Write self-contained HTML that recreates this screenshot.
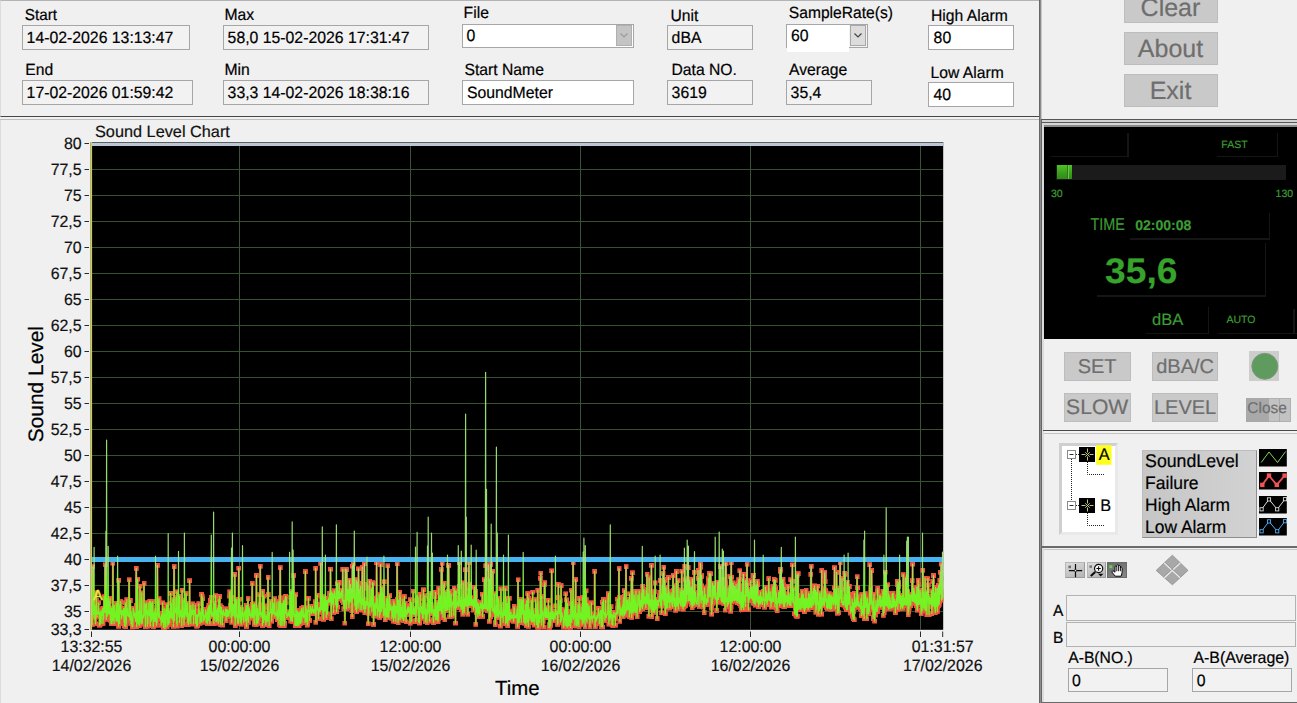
<!DOCTYPE html>
<html><head><meta charset="utf-8"><title>Sound Level Meter</title>
<style>
html,body{margin:0;padding:0;}
body{text-rendering:geometricPrecision;width:1297px;height:703px;overflow:hidden;background:#f0f0f0;position:relative;font-family:"Liberation Sans", Arial, sans-serif;}
.t{position:absolute;white-space:nowrap;}
.b{position:absolute;box-sizing:border-box;}
svg{position:absolute;overflow:visible;}
svg text{font-family:"Liberation Sans", Arial, sans-serif;}
</style></head><body>
<div class="b" style="left:0;top:119px;width:1040px;height:584px;border-left:1px solid #dcdcdc;"></div>
<svg width="1297" height="703" style="left:0;top:0">
<defs><marker id="sq" markerWidth="5" markerHeight="5" refX="2.5" refY="2.5" markerUnits="userSpaceOnUse"><rect width="5" height="5" fill="#f2563e"/></marker><linearGradient id="gg" gradientUnits="userSpaceOnUse" x1="0" y1="142" x2="0" y2="630"><stop offset="0" stop-color="#a2ea74"/><stop offset="0.86" stop-color="#a2ea74"/><stop offset="0.93" stop-color="#6cff22"/><stop offset="1" stop-color="#68ff1c"/></linearGradient><clipPath id="cp"><rect x="91" y="141.5" width="852.2" height="488.3"/></clipPath></defs>
<rect x="90.5" y="142" width="852.7" height="487.8" fill="#000"/>
<path d="M239.5 142 V629.8 M410.5 142 V629.8 M580.5 142 V629.8 M750.5 142 V629.8 M920.5 142 V629.8" stroke="#3d523a" stroke-width="1" fill="none"/>
<path d="M91 169.5 H943 M91 195.5 H943 M91 221.5 H943 M91 247.5 H943 M91 273.5 H943 M91 299.5 H943 M91 325.5 H943 M91 351.5 H943 M91 377.5 H943 M91 403.5 H943 M91 429.5 H943 M91 455.5 H943 M91 481.5 H943 M91 507.5 H943 M91 533.5 H943 M91 559.5 H943 M91 585.5 H943 M91 611.5 H943" stroke="#34522b" stroke-width="1" fill="none"/>
<g clip-path="url(#cp)">
<rect x="91" y="142" width="852.6" height="1" fill="#5a625e"/><rect x="91" y="143" width="852.2" height="3" fill="#bcc6d8"/>
<path d="M91.5 616.8 L91.7 615.0 L92.0 614.6 L92.2 624.4 L92.4 599.6 L92.7 614.6 L92.9 566.7 L93.1 606.0 L93.4 613.3 L93.6 609.5 L93.9 614.4 M94.3 619.1 L94.6 605.3 L94.8 618.5 L95.0 614.0 L95.3 617.2 L95.5 623.8 L95.7 606.6 L96.0 614.2 L96.2 592.8 L96.4 600.4 L96.7 607.9 L96.9 615.3 L97.1 612.6 L97.4 612.6 L97.6 613.9 L97.9 611.6 L98.1 613.5 L98.3 611.5 L98.6 602.8 L98.8 614.6 L99.0 614.1 L99.3 614.3 L99.5 625.2 L99.7 612.3 L100.0 624.9 L100.2 616.4 L100.4 615.6 L100.7 614.1 L100.9 610.7 L101.1 623.5 L101.4 614.5 L101.6 615.4 L101.9 614.9 L102.1 615.3 L102.3 609.8 L102.6 614.0 L102.8 608.1 L103.0 623.4 L103.3 609.4 L103.5 616.0 L103.7 619.1 L104.0 596.7 L104.2 611.7 L104.4 612.4 L104.7 612.1 L104.9 610.2 L105.1 564.8 L105.4 612.3 L105.6 612.6 M106.1 611.1 L106.3 619.3 M106.8 600.8 L107.0 616.5 L107.3 601.8 L107.5 614.8 L107.7 615.1 L108.0 610.0 M108.4 610.8 L108.7 612.3 L108.9 613.4 L109.1 612.2 L109.4 601.4 L109.6 612.5 L109.9 614.9 L110.1 598.1 L110.3 620.2 L110.6 614.5 L110.8 615.5 L111.0 623.7 L111.3 616.2 L111.5 607.8 L111.7 618.0 L112.0 623.8 L112.2 616.7 L112.4 615.7 L112.7 616.5 L112.9 563.1 L113.1 620.3 L113.4 616.1 L113.6 613.7 L113.9 610.3 L114.1 623.7 L114.3 605.3 L114.6 610.6 L114.8 614.0 L115.0 613.5 L115.3 617.5 L115.5 612.5 L115.7 614.6 L116.0 621.1 L116.2 603.3 L116.4 611.6 L116.7 611.1 L116.9 611.3 L117.1 621.2 L117.4 606.5 M117.9 614.5 L118.1 614.8 L118.3 619.8 L118.6 626.3 L118.8 580.4 L119.0 616.2 L119.3 614.3 L119.5 616.3 L119.7 623.6 L120.0 608.6 L120.2 604.9 L120.4 611.9 L120.7 601.6 L120.9 613.8 L121.1 612.4 L121.4 611.1 L121.6 618.6 L121.8 614.8 L122.1 610.4 L122.3 610.5 L122.6 613.3 L122.8 614.7 L123.0 612.5 L123.3 615.8 L123.5 608.6 L123.7 612.6 L124.0 621.4 L124.2 611.2 L124.4 626.0 L124.7 608.1 L124.9 613.4 L125.1 610.8 L125.4 602.8 L125.6 611.0 L125.8 626.8 L126.1 621.4 L126.3 623.4 L126.6 612.3 L126.8 599.7 L127.0 607.7 L127.3 608.4 L127.5 609.9 L127.7 615.8 L128.0 614.1 L128.2 615.4 L128.4 614.2 L128.7 616.7 L128.9 614.1 L129.1 579.8 L129.4 609.8 L129.6 615.1 L129.8 618.0 L130.1 620.1 L130.3 600.5 L130.6 618.1 L130.8 612.3 L131.0 623.9 L131.3 611.9 L131.5 623.3 L131.7 616.1 L132.0 627.0 L132.2 617.3 L132.4 618.3 L132.7 626.3 L132.9 623.1 L133.1 608.2 L133.4 609.0 L133.6 610.8 L133.8 610.0 L134.1 615.4 L134.3 614.4 L134.6 617.4 L134.8 613.1 L135.0 617.2 L135.3 615.6 L135.5 621.2 L135.7 616.4 L136.0 613.8 L136.2 568.4 L136.4 605.1 L136.7 626.7 L136.9 609.2 L137.1 616.5 L137.4 611.1 L137.6 579.1 L137.8 612.7 L138.1 624.0 L138.3 617.4 L138.6 615.7 L138.8 611.2 L139.0 611.2 L139.3 625.6 L139.5 614.7 L139.7 611.9 L140.0 586.1 L140.2 614.4 L140.4 610.8 L140.7 621.8 L140.9 615.1 L141.1 624.0 L141.4 614.2 L141.6 604.6 L141.8 592.9 L142.1 620.5 L142.3 623.3 L142.6 617.8 L142.8 615.5 L143.0 618.1 L143.3 616.7 L143.5 617.5 L143.7 617.7 L144.0 583.4 L144.2 615.5 L144.4 614.3 L144.7 614.6 L144.9 613.6 L145.1 604.1 L145.4 626.7 L145.6 614.4 L145.8 608.2 L146.1 612.9 L146.3 602.8 L146.6 612.3 L146.8 614.4 L147.0 611.9 L147.3 626.3 L147.5 611.6 L147.7 610.3 L148.0 623.6 L148.2 602.8 L148.4 612.1 L148.7 613.6 L148.9 612.7 L149.1 612.6 L149.4 615.7 L149.6 614.4 L149.8 601.0 L150.1 614.6 L150.3 625.9 L150.6 601.5 L150.8 619.7 L151.0 604.9 L151.3 621.2 L151.5 603.1 L151.7 612.7 L152.0 618.7 L152.2 607.2 L152.4 615.3 L152.7 601.6 L152.9 614.0 L153.1 626.0 L153.4 626.5 L153.6 619.1 L153.8 612.5 L154.1 615.7 L154.3 614.8 L154.6 621.2 L154.8 610.7 L155.0 616.7 L155.3 621.1 M155.7 617.5 L156.0 614.1 L156.2 616.4 L156.4 625.3 L156.7 614.4 L156.9 613.1 L157.1 622.7 L157.4 565.3 L157.6 615.1 L157.8 611.3 L158.1 614.7 L158.3 601.5 L158.6 617.7 L158.8 614.9 L159.0 598.7 L159.3 615.3 L159.5 613.1 L159.7 617.0 L160.0 616.7 L160.2 619.5 L160.4 617.4 L160.7 619.8 L160.9 617.9 L161.1 625.2 L161.4 619.9 L161.6 614.7 L161.8 614.6 L162.1 622.3 L162.3 617.1 L162.6 602.9 L162.8 614.2 L163.0 616.2 L163.3 617.4 L163.5 627.4 L163.7 613.8 L164.0 619.6 L164.2 608.4 L164.4 617.5 L164.7 614.7 L164.9 628.4 L165.1 619.8 L165.4 626.7 L165.6 617.8 L165.8 609.9 L166.1 608.8 L166.3 619.0 L166.6 618.9 L166.8 604.8 L167.0 626.6 L167.3 616.0 L167.5 614.6 L167.7 613.9 L168.0 618.2 M168.4 624.4 L168.7 622.0 L168.9 619.1 L169.1 611.5 L169.4 615.2 L169.6 622.8 L169.8 610.6 L170.1 618.3 L170.3 615.8 L170.6 593.4 L170.8 617.3 L171.0 615.5 L171.3 603.0 L171.5 616.3 L171.7 615.2 L172.0 618.9 L172.2 614.2 L172.4 612.8 L172.7 615.7 L172.9 599.3 L173.1 612.8 L173.4 626.3 L173.6 607.5 L173.8 605.6 L174.1 566.6 L174.3 601.8 L174.5 620.6 L174.8 608.3 L175.0 611.8 L175.3 612.7 L175.5 611.9 L175.7 610.7 L176.0 597.5 L176.2 607.5 L176.4 608.4 L176.7 623.5 L176.9 591.9 L177.1 626.1 L177.4 607.2 L177.6 611.3 L177.8 610.5 L178.1 613.7 L178.3 612.9 M178.8 616.4 L179.0 601.3 L179.3 613.3 L179.5 622.3 L179.7 596.2 L180.0 615.3 L180.2 616.6 L180.4 613.4 L180.7 615.4 L180.9 615.3 L181.1 610.5 L181.4 613.8 L181.6 622.6 L181.8 625.9 L182.1 590.2 L182.3 616.8 L182.5 617.4 L182.8 600.3 L183.0 614.7 L183.3 615.0 L183.5 614.1 L183.7 615.2 L184.0 624.8 L184.2 616.1 M184.7 617.9 L184.9 614.8 L185.1 616.4 L185.4 613.3 L185.6 610.4 L185.8 611.9 L186.1 593.6 L186.3 613.4 L186.5 613.1 L186.8 616.6 L187.0 614.6 L187.3 615.5 L187.5 603.0 L187.7 622.7 L188.0 616.2 L188.2 613.7 L188.4 624.7 L188.7 615.2 L188.9 623.2 L189.1 613.3 L189.4 613.2 L189.6 580.7 L189.8 617.6 L190.1 616.9 L190.3 620.6 L190.5 616.2 L190.8 623.7 L191.0 605.3 L191.3 616.3 L191.5 613.8 L191.7 610.6 L192.0 613.5 L192.2 613.7 L192.4 614.5 L192.7 614.2 L192.9 603.9 L193.1 612.0 L193.4 612.1 L193.6 624.0 L193.8 612.8 L194.1 615.2 L194.3 610.2 L194.5 610.9 L194.8 610.8 L195.0 613.1 L195.3 605.3 L195.5 616.5 L195.7 623.4 L196.0 614.8 L196.2 616.4 L196.4 617.9 L196.7 626.2 L196.9 614.5 L197.1 625.7 L197.4 615.2 L197.6 625.3 L197.8 614.8 L198.1 616.8 L198.3 616.8 L198.5 614.6 L198.8 603.7 L199.0 614.6 L199.3 612.2 L199.5 610.7 L199.7 613.8 L200.0 623.3 L200.2 618.1 L200.4 614.7 L200.7 612.2 L200.9 615.5 L201.1 618.0 L201.4 622.0 L201.6 594.3 L201.8 611.5 L202.1 596.4 L202.3 615.7 L202.5 613.8 L202.8 598.7 L203.0 622.1 L203.3 609.3 L203.5 619.4 L203.7 616.5 L204.0 614.8 L204.2 620.1 L204.4 617.8 L204.7 617.7 L204.9 616.4 L205.1 616.8 L205.4 615.1 L205.6 609.9 L205.8 613.8 L206.1 622.2 L206.3 614.7 L206.5 614.7 L206.8 614.6 L207.0 612.1 L207.3 623.8 L207.5 611.7 L207.7 609.9 L208.0 607.9 L208.2 608.8 L208.4 620.6 L208.7 608.9 L208.9 605.5 L209.1 605.4 L209.4 606.6 L209.6 610.8 L209.8 623.9 L210.1 609.2 L210.3 604.0 L210.5 600.3 L210.8 613.3 L211.0 597.2 M211.5 614.1 L211.7 616.3 L212.0 611.5 L212.2 614.1 L212.4 614.3 L212.7 615.1 L212.9 614.8 L213.1 616.3 L213.4 615.5 M213.8 623.8 L214.1 610.5 L214.3 619.7 L214.5 619.7 L214.8 608.1 L215.0 603.4 L215.3 608.4 L215.5 595.7 L215.7 607.3 L216.0 621.7 L216.2 612.0 L216.4 621.8 L216.7 610.7 L216.9 613.5 L217.1 619.8 L217.4 608.0 L217.6 611.4 L217.8 609.3 L218.1 621.1 L218.3 623.3 L218.5 611.0 L218.8 599.5 L219.0 611.0 L219.3 609.1 L219.5 611.4 L219.7 596.5 L220.0 621.6 L220.2 605.8 L220.4 607.3 L220.7 624.6 L220.9 610.5 L221.1 609.7 L221.4 607.3 L221.6 610.7 L221.8 614.0 L222.1 610.9 L222.3 613.9 L222.5 625.0 L222.8 614.3 L223.0 615.1 L223.3 613.6 L223.5 609.9 L223.7 614.2 L224.0 615.0 L224.2 613.4 L224.4 615.4 L224.7 615.7 L224.9 615.1 L225.1 612.4 L225.4 614.4 L225.6 608.8 L225.8 611.8 L226.1 620.6 L226.3 611.0 L226.5 610.1 L226.8 609.6 L227.0 611.4 L227.2 616.5 L227.5 616.6 L227.7 610.2 L228.0 612.8 L228.2 616.2 L228.4 611.0 L228.7 611.3 L228.9 616.2 L229.1 611.9 L229.4 613.7 L229.6 596.0 L229.8 591.9 L230.1 605.4 L230.3 609.4 L230.5 610.8 L230.8 605.3 L231.0 617.2 L231.2 610.1 M231.7 622.2 L232.0 597.6 L232.2 597.9 M232.7 616.0 L232.9 615.1 L233.1 615.0 L233.4 614.7 L233.6 605.2 L233.8 613.8 L234.1 614.4 L234.3 611.5 L234.5 616.6 L234.8 574.4 L235.0 613.8 L235.2 625.5 L235.5 599.1 L235.7 617.8 L236.0 615.9 L236.2 615.4 L236.4 614.5 L236.7 602.3 L236.9 599.4 L237.1 615.2 L237.4 618.6 L237.6 623.1 L237.8 614.5 L238.1 621.8 L238.3 620.4 L238.5 623.8 L238.8 568.0 L239.0 615.4 L239.2 614.4 L239.5 599.0 L239.7 617.8 L240.0 616.7 L240.2 622.0 L240.4 617.2 L240.7 607.4 L240.9 616.6 L241.1 624.2 L241.4 621.0 L241.6 615.4 L241.8 614.6 L242.1 611.0 L242.3 614.9 M242.8 616.5 L243.0 615.3 L243.2 620.0 L243.5 613.1 L243.7 622.6 L244.0 613.5 L244.2 613.0 L244.4 613.2 L244.7 611.8 L244.9 614.1 L245.1 610.2 L245.4 621.0 L245.6 609.5 L245.8 611.3 L246.1 605.3 L246.3 612.2 L246.5 626.4 L246.8 620.1 L247.0 610.1 L247.2 606.0 L247.5 619.4 L247.7 609.7 L248.0 598.6 L248.2 610.9 L248.4 622.3 L248.7 613.6 L248.9 614.3 L249.1 608.0 L249.4 615.7 L249.6 609.3 L249.8 611.0 L250.1 615.3 L250.3 614.6 L250.5 615.6 L250.8 618.3 L251.0 614.2 L251.2 616.0 L251.5 611.4 L251.7 615.1 L252.0 604.5 L252.2 583.6 L252.4 617.7 L252.7 609.0 L252.9 605.7 L253.1 615.1 L253.4 614.8 L253.6 616.9 L253.8 604.4 L254.1 622.5 L254.3 624.3 L254.5 604.0 L254.8 603.9 L255.0 614.9 L255.2 611.5 L255.5 611.6 L255.7 610.4 L256.0 611.1 L256.2 624.9 L256.4 575.4 L256.7 614.7 L256.9 622.4 L257.1 611.5 L257.4 613.6 L257.6 608.7 L257.8 623.4 L258.1 621.8 L258.3 617.5 L258.5 612.4 L258.8 619.4 L259.0 613.3 L259.2 607.0 L259.5 594.7 L259.7 614.7 L260.0 613.7 L260.2 566.2 L260.4 604.9 L260.7 613.2 L260.9 616.9 L261.1 613.7 L261.4 615.3 L261.6 613.8 L261.8 615.2 L262.1 612.0 L262.3 615.0 L262.5 625.4 L262.8 591.4 L263.0 610.1 L263.2 608.3 L263.5 614.2 L263.7 622.6 L264.0 596.0 L264.2 613.4 L264.4 619.7 L264.7 605.9 L264.9 615.8 L265.1 614.1 L265.4 616.9 L265.6 616.1 L265.8 624.9 L266.1 620.6 L266.3 617.1 L266.5 621.1 L266.8 615.4 L267.0 614.6 L267.2 621.7 L267.5 607.5 L267.7 620.8 L268.0 577.3 L268.2 594.6 L268.4 617.1 L268.7 615.8 L268.9 615.6 L269.1 625.7 L269.4 613.0 L269.6 612.4 L269.8 612.7 L270.1 611.9 L270.3 601.2 L270.5 612.0 L270.8 613.1 L271.0 609.1 L271.2 611.3 L271.5 609.8 L271.7 621.2 L272.0 613.9 M272.4 613.7 L272.7 611.6 L272.9 606.1 L273.1 614.2 L273.4 603.3 L273.6 612.6 L273.8 612.5 L274.1 607.4 L274.3 611.9 L274.5 613.9 L274.8 598.7 L275.0 616.6 L275.2 613.6 L275.5 614.1 L275.7 612.9 L276.0 613.8 L276.2 614.5 L276.4 615.3 L276.7 615.8 L276.9 602.5 L277.1 619.9 L277.4 618.8 L277.6 610.9 L277.8 613.2 L278.1 616.1 L278.3 615.8 L278.5 617.6 L278.8 601.6 L279.0 624.4 L279.2 616.5 L279.5 610.1 L279.7 614.6 L279.9 615.0 L280.2 567.6 L280.4 597.8 L280.7 625.8 L280.9 611.4 L281.1 609.4 L281.4 610.2 L281.6 619.8 L281.8 603.5 L282.1 625.5 L282.3 614.6 L282.5 613.2 L282.8 610.7 L283.0 603.0 L283.2 607.9 L283.5 620.4 L283.7 600.5 L283.9 622.2 L284.2 625.7 L284.4 605.9 L284.7 623.0 L284.9 607.7 L285.1 598.6 L285.4 611.9 L285.6 596.4 L285.8 612.9 L286.1 602.8 L286.3 597.3 L286.5 614.5 L286.8 615.4 L287.0 617.4 L287.2 614.3 L287.5 616.2 L287.7 613.8 L287.9 614.7 L288.2 611.8 L288.4 614.4 L288.7 613.7 L288.9 615.7 L289.1 615.0 L289.4 616.3 M289.8 612.6 L290.1 617.1 L290.3 616.7 L290.5 617.4 L290.8 621.0 L291.0 591.6 L291.2 615.6 L291.5 617.6 L291.7 620.1 L291.9 612.5 M292.4 621.4 L292.7 614.8 L292.9 617.0 M293.4 614.2 L293.6 608.6 L293.8 575.4 L294.1 612.1 L294.3 616.8 L294.5 615.1 L294.8 614.6 L295.0 625.6 L295.2 614.4 L295.5 614.7 L295.7 620.8 L295.9 594.7 L296.2 625.4 L296.4 615.0 L296.7 615.8 L296.9 615.3 L297.1 610.5 L297.4 625.6 L297.6 619.8 L297.8 624.2 L298.1 616.3 L298.3 612.4 L298.5 622.2 L298.8 613.7 L299.0 625.7 L299.2 619.7 L299.5 614.8 L299.7 612.5 L299.9 615.4 L300.2 611.2 L300.4 623.4 L300.7 612.9 L300.9 613.9 L301.1 614.0 L301.4 611.8 L301.6 608.3 L301.8 622.6 L302.1 610.4 L302.3 613.8 L302.5 611.3 L302.8 612.2 L303.0 616.1 L303.2 607.0 L303.5 616.4 L303.7 617.7 L303.9 614.4 L304.2 614.8 L304.4 615.7 L304.7 615.0 L304.9 612.8 L305.1 622.6 L305.4 571.6 L305.6 619.2 L305.8 612.5 L306.1 607.8 L306.3 621.2 L306.5 611.0 L306.8 610.6 L307.0 610.2 L307.2 625.1 L307.5 613.3 L307.7 623.8 L307.9 610.0 L308.2 611.5 L308.4 598.3 L308.7 610.1 L308.9 610.7 L309.1 610.7 L309.4 611.4 L309.6 620.4 L309.8 612.3 L310.1 611.5 L310.3 606.2 L310.5 608.6 L310.8 611.3 L311.0 611.2 L311.2 609.0 L311.5 613.5 L311.7 610.5 L311.9 610.7 L312.2 607.2 L312.4 606.4 L312.7 611.6 L312.9 611.9 L313.1 611.6 L313.4 610.0 L313.6 613.1 L313.8 609.3 L314.1 611.3 L314.3 610.7 L314.5 609.9 L314.8 608.6 L315.0 601.7 L315.2 613.9 L315.5 611.5 L315.7 568.2 L315.9 622.2 L316.2 610.5 L316.4 606.8 L316.7 608.1 L316.9 606.0 L317.1 609.2 L317.4 595.1 L317.6 610.1 L317.8 610.1 L318.1 609.2 L318.3 610.0 L318.5 618.8 L318.8 612.1 L319.0 611.8 L319.2 607.7 L319.5 609.6 L319.7 608.7 L319.9 611.0 L320.2 611.6 L320.4 604.6 L320.7 563.2 L320.9 604.0 L321.1 609.4 L321.4 607.7 L321.6 596.1 L321.8 604.5 L322.1 609.8 M322.5 599.0 L322.8 612.5 L323.0 611.7 L323.2 616.8 L323.5 619.3 L323.7 612.2 L323.9 596.7 L324.2 609.6 L324.4 611.5 L324.7 606.1 L324.9 610.4 L325.1 610.5 M325.6 598.4 L325.8 602.7 L326.1 605.3 L326.3 617.5 L326.5 602.9 L326.8 602.4 L327.0 600.4 L327.2 601.8 L327.5 614.1 L327.7 602.0 L327.9 603.2 L328.2 602.5 L328.4 598.7 L328.7 598.1 L328.9 598.5 L329.1 602.2 L329.4 597.7 L329.6 593.4 L329.8 601.2 L330.1 601.5 L330.3 600.6 L330.5 569.0 L330.8 602.8 L331.0 597.0 L331.2 618.8 L331.5 601.5 L331.7 592.1 L331.9 602.0 L332.2 602.7 L332.4 604.0 L332.6 593.5 L332.9 594.0 L333.1 597.3 L333.4 596.8 L333.6 612.4 L333.8 597.8 L334.1 598.7 L334.3 590.8 L334.5 591.6 L334.8 594.9 L335.0 597.4 L335.2 596.4 L335.5 597.8 L335.7 604.8 L335.9 598.1 L336.2 598.3 M336.6 611.8 L336.9 605.3 L337.1 597.1 L337.4 583.7 L337.6 607.0 L337.8 599.0 L338.1 597.6 L338.3 591.5 L338.5 593.6 L338.8 597.7 L339.0 598.6 L339.2 582.5 L339.5 594.1 L339.7 598.6 L339.9 593.2 L340.2 598.2 L340.4 595.1 L340.6 593.4 L340.9 597.1 L341.1 592.3 L341.4 594.7 L341.6 590.0 L341.8 591.5 L342.1 597.7 L342.3 599.9 L342.5 600.7 L342.8 569.3 L343.0 598.1 L343.2 602.8 L343.5 601.5 L343.7 601.4 L343.9 608.7 L344.2 600.4 L344.4 602.4 L344.6 601.3 L344.9 623.0 L345.1 598.9 L345.4 569.2 L345.6 598.8 L345.8 599.8 L346.1 596.7 L346.3 600.3 L346.5 608.8 L346.8 569.7 L347.0 596.1 L347.2 598.6 L347.5 599.6 L347.7 600.3 L347.9 589.3 L348.2 597.6 L348.4 604.1 L348.6 594.9 L348.9 607.7 L349.1 599.5 L349.4 580.2 L349.6 595.2 L349.8 601.5 L350.1 602.1 L350.3 599.0 L350.5 584.7 L350.8 601.1 L351.0 600.3 L351.2 598.0 L351.5 588.9 L351.7 597.1 L351.9 610.8 L352.2 616.5 L352.4 566.1 L352.6 596.7 L352.9 594.0 L353.1 563.6 L353.4 598.1 L353.6 594.0 L353.8 597.1 L354.1 579.8 M354.5 590.4 L354.8 605.7 L355.0 604.8 L355.2 596.7 L355.5 596.3 L355.7 609.3 L355.9 592.3 L356.2 579.8 L356.4 596.7 L356.6 611.7 L356.9 584.3 L357.1 581.9 L357.4 601.6 L357.6 597.8 L357.8 600.7 L358.1 608.2 L358.3 602.6 L358.5 568.9 L358.8 602.3 L359.0 599.3 L359.2 599.2 L359.5 589.8 L359.7 599.5 L359.9 603.1 L360.2 609.6 L360.4 586.0 L360.6 599.9 L360.9 602.8 L361.1 600.6 L361.4 602.0 L361.6 599.2 L361.8 610.0 L362.1 583.3 L362.3 567.1 L362.5 604.6 L362.8 598.4 L363.0 602.1 L363.2 601.5 L363.5 599.1 L363.7 609.0 L363.9 601.6 L364.2 584.1 L364.4 563.7 L364.6 600.7 L364.9 612.6 L365.1 601.1 L365.4 606.2 L365.6 603.3 L365.8 608.4 L366.1 601.7 L366.3 605.5 L366.5 603.4 L366.8 603.6 M367.2 588.2 L367.5 604.9 L367.7 601.9 L367.9 585.6 L368.2 623.9 L368.4 603.3 L368.6 605.4 L368.9 613.4 L369.1 602.7 L369.4 605.2 L369.6 606.4 L369.8 581.0 L370.1 607.2 L370.3 606.4 L370.5 603.5 L370.8 605.5 L371.0 601.9 L371.2 603.7 L371.5 588.9 L371.7 605.7 L371.9 611.5 L372.2 602.9 L372.4 599.4 L372.6 582.7 L372.9 604.9 L373.1 583.1 L373.4 603.0 L373.6 624.4 L373.8 615.8 L374.1 612.3 L374.3 605.0 L374.5 615.0 L374.8 614.1 L375.0 603.2 L375.2 605.4 L375.5 604.1 L375.7 615.4 L375.9 607.2 L376.2 598.2 L376.4 608.1 L376.6 562.8 L376.9 604.7 L377.1 597.7 L377.4 599.5 L377.6 616.2 L377.8 609.0 L378.1 608.0 L378.3 610.7 L378.5 611.1 L378.8 605.9 L379.0 601.3 L379.2 594.7 L379.5 612.1 L379.7 617.4 L379.9 611.5 L380.2 614.2 L380.4 609.0 L380.6 564.6 L380.9 609.2 L381.1 594.9 L381.4 611.4 L381.6 606.8 L381.8 607.6 L382.1 587.5 L382.3 605.8 L382.5 608.0 L382.8 593.9 L383.0 608.1 L383.2 609.5 L383.5 615.8 L383.7 605.6 M384.2 581.8 L384.4 606.4 L384.6 614.7 L384.9 610.3 L385.1 619.8 L385.3 608.8 L385.6 609.6 L385.8 616.4 L386.1 603.2 L386.3 608.3 L386.5 598.5 L386.8 608.1 L387.0 617.2 L387.2 606.1 L387.5 607.2 L387.7 611.3 L387.9 565.8 L388.2 616.6 L388.4 610.4 L388.6 610.5 L388.9 617.9 L389.1 601.3 L389.3 611.7 L389.6 595.6 L389.8 605.5 L390.1 609.7 L390.3 605.0 L390.5 604.5 L390.8 604.7 L391.0 610.5 L391.2 607.8 L391.5 610.7 L391.7 608.0 L391.9 618.3 L392.2 606.7 L392.4 616.9 L392.6 607.9 L392.9 611.2 L393.1 611.4 L393.3 605.6 L393.6 621.1 L393.8 601.0 L394.1 608.7 L394.3 604.6 L394.5 613.3 L394.8 604.2 L395.0 617.8 L395.2 606.9 L395.5 607.3 L395.7 606.4 L395.9 621.7 L396.2 607.6 L396.4 609.4 L396.6 606.4 L396.9 612.6 L397.1 563.7 L397.3 599.1 L397.6 608.3 L397.8 611.6 L398.1 622.7 L398.3 610.0 L398.5 600.1 L398.8 619.9 L399.0 610.5 L399.2 606.6 L399.5 610.9 L399.7 610.5 L399.9 592.3 L400.2 619.8 L400.4 597.3 L400.6 613.9 L400.9 604.8 L401.1 617.1 L401.3 607.3 L401.6 608.1 L401.8 613.3 L402.1 613.0 L402.3 618.5 L402.5 612.2 L402.8 599.3 L403.0 611.6 L403.2 619.7 L403.5 613.5 L403.7 620.7 L403.9 620.2 L404.2 612.2 L404.4 596.6 L404.6 613.2 L404.9 616.4 L405.1 612.0 L405.3 603.2 L405.6 613.8 L405.8 611.8 L406.1 621.8 L406.3 610.1 L406.5 612.3 L406.8 614.3 L407.0 614.0 L407.2 614.2 L407.5 607.8 L407.7 612.0 L407.9 607.4 L408.2 606.3 L408.4 612.4 L408.6 609.6 L408.9 609.1 L409.1 611.9 L409.3 609.6 L409.6 607.7 L409.8 609.5 L410.1 623.1 L410.3 599.7 L410.5 605.0 L410.8 612.7 L411.0 613.8 L411.2 613.3 L411.5 602.6 L411.7 621.4 L411.9 610.6 L412.2 613.5 L412.4 613.5 L412.6 611.8 L412.9 613.5 L413.1 591.0 L413.3 614.0 L413.6 608.8 L413.8 610.1 L414.1 608.2 L414.3 614.6 L414.5 612.7 L414.8 611.6 L415.0 611.6 L415.2 613.1 M415.7 621.6 L415.9 620.4 L416.2 613.2 L416.4 612.6 L416.6 600.4 L416.9 609.2 M417.3 604.4 L417.6 602.5 L417.8 605.7 L418.1 597.4 L418.3 609.0 L418.5 621.5 L418.8 607.3 L419.0 611.3 L419.2 623.0 L419.5 622.8 L419.7 610.6 L419.9 609.1 L420.2 594.5 L420.4 596.3 L420.6 606.6 L420.9 609.0 L421.1 612.8 L421.3 612.8 L421.6 606.6 L421.8 607.5 L422.1 614.2 L422.3 606.7 L422.5 618.3 L422.8 605.5 L423.0 598.5 L423.2 618.0 L423.5 589.8 L423.7 609.0 L423.9 608.3 L424.2 604.4 L424.4 614.0 L424.6 610.8 L424.9 595.7 L425.1 608.8 L425.3 621.9 L425.6 610.0 L425.8 609.1 L426.1 618.6 L426.3 618.5 L426.5 611.7 L426.8 610.8 L427.0 622.9 L427.2 606.1 M427.7 614.4 L427.9 610.3 M428.4 611.4 L428.6 608.8 L428.9 598.9 L429.1 612.4 L429.3 611.9 L429.6 621.2 L429.8 604.3 L430.1 593.0 L430.3 610.9 L430.5 612.0 L430.8 607.0 L431.0 604.4 L431.2 609.1 M431.7 613.7 L431.9 608.2 L432.2 609.9 M432.6 610.0 L432.9 608.8 L433.1 612.1 L433.3 619.7 L433.6 622.6 L433.8 611.8 L434.1 609.9 L434.3 612.0 L434.5 612.3 L434.8 615.9 L435.0 596.9 L435.2 609.4 L435.5 592.4 L435.7 620.0 L435.9 606.8 L436.2 606.7 L436.4 616.1 L436.6 608.6 L436.9 619.4 L437.1 603.4 L437.3 602.3 L437.6 612.8 L437.8 615.8 L438.0 621.7 L438.3 618.4 L438.5 610.9 L438.8 588.1 L439.0 607.0 L439.2 610.0 L439.5 609.8 L439.7 610.7 L439.9 606.5 L440.2 595.9 L440.4 609.7 L440.6 608.2 L440.9 609.5 L441.1 611.3 L441.3 569.3 L441.6 613.3 L441.8 603.7 L442.0 563.2 L442.3 607.2 L442.5 609.1 L442.8 610.0 L443.0 617.5 L443.2 610.5 L443.5 604.2 L443.7 585.2 L443.9 607.5 L444.2 583.1 L444.4 604.9 L444.6 600.5 L444.9 619.8 L445.1 601.4 L445.3 596.3 L445.6 605.0 L445.8 592.0 L446.0 610.3 L446.3 608.5 L446.5 607.3 L446.8 610.5 L447.0 606.8 L447.2 593.3 M447.7 609.5 L447.9 609.5 L448.2 591.4 L448.4 591.8 L448.6 565.4 L448.9 606.1 L449.1 605.0 L449.3 607.4 L449.6 616.8 L449.8 591.3 L450.0 602.6 L450.3 606.0 L450.5 605.1 L450.8 605.3 L451.0 606.7 L451.2 594.1 L451.5 616.3 L451.7 608.0 L451.9 607.5 L452.2 602.4 L452.4 605.2 L452.6 604.9 L452.9 601.9 L453.1 604.3 L453.3 604.6 L453.6 593.7 L453.8 615.2 L454.0 588.4 L454.3 604.1 L454.5 603.0 L454.8 607.8 L455.0 603.1 L455.2 590.9 L455.5 623.0 L455.7 591.3 L455.9 597.4 L456.2 591.2 L456.4 607.7 L456.6 607.2 L456.9 604.6 L457.1 605.8 L457.3 602.6 L457.6 603.2 L457.8 600.5 L458.0 604.4 M458.5 606.6 L458.8 604.5 L459.0 603.4 L459.2 586.3 L459.5 562.6 L459.7 602.9 L459.9 599.8 L460.2 606.1 L460.4 602.6 L460.6 601.2 L460.9 605.3 L461.1 609.5 M461.6 603.2 L461.8 604.1 L462.0 599.9 L462.3 608.5 L462.5 605.4 L462.8 614.2 L463.0 603.1 L463.2 582.9 L463.5 601.2 L463.7 601.7 L463.9 598.1 L464.2 612.6 L464.4 608.5 L464.6 604.4 L464.9 600.5 L465.1 602.4 L465.3 569.8 M465.8 605.1 L466.0 606.4 M466.5 605.1 L466.8 605.7 L467.0 604.1 L467.2 599.4 L467.5 603.3 L467.7 595.9 L467.9 614.2 L468.2 588.4 L468.4 600.1 L468.6 603.6 L468.9 562.4 L469.1 605.5 L469.3 602.7 L469.6 584.0 L469.8 604.6 L470.0 602.3 L470.3 603.7 L470.5 604.5 L470.8 597.8 L471.0 605.4 M471.5 603.0 L471.7 605.7 L471.9 599.7 L472.2 600.4 L472.4 601.4 L472.6 605.4 L472.9 602.8 L473.1 606.0 L473.3 599.2 L473.6 610.0 L473.8 602.5 L474.0 603.0 L474.3 599.6 L474.5 587.2 L474.8 606.2 L475.0 607.2 L475.2 599.1 L475.5 591.4 L475.7 595.6 L475.9 624.3 M476.4 602.6 L476.6 612.7 L476.9 601.2 L477.1 612.4 L477.3 602.8 L477.6 604.0 L477.8 616.7 L478.0 604.8 L478.3 603.7 L478.5 605.7 L478.8 613.6 L479.0 608.3 L479.2 607.3 L479.5 607.5 L479.7 606.7 L479.9 615.5 L480.2 602.7 L480.4 606.8 L480.6 606.6 L480.9 607.3 L481.1 604.5 L481.3 603.8 L481.6 608.8 L481.8 608.0 L482.0 610.0 L482.3 594.2 L482.5 616.4 L482.8 604.6 L483.0 606.6 L483.2 608.3 L483.5 608.7 L483.7 606.4 L483.9 604.1 L484.2 608.6 L484.4 579.7 L484.6 608.4 L484.9 597.9 L485.1 608.3 L485.3 602.6 M485.8 565.8 L486.0 608.6 L486.3 605.9 M486.8 597.4 L487.0 608.5 L487.2 609.4 L487.5 610.9 L487.7 610.5 L487.9 608.8 L488.2 606.5 L488.4 564.9 L488.6 568.7 L488.9 606.8 L489.1 601.4 L489.3 621.3 L489.6 609.4 L489.8 579.4 L490.0 594.5 L490.3 593.9 L490.5 616.7 L490.7 564.4 L491.0 607.3 M491.5 607.0 L491.7 606.6 L491.9 601.0 L492.2 610.3 L492.4 609.8 L492.6 609.0 L492.9 571.1 L493.1 611.4 L493.3 609.1 L493.6 608.3 L493.8 612.8 L494.0 609.7 L494.3 612.4 L494.5 613.3 L494.7 593.8 L495.0 622.7 L495.2 624.8 L495.5 614.7 L495.7 607.5 L495.9 611.9 L496.2 614.3 M496.6 609.7 L496.9 617.8 L497.1 613.1 M497.6 615.4 L497.8 615.3 L498.0 609.1 L498.3 598.2 L498.5 616.9 L498.7 599.8 L499.0 604.1 L499.2 611.5 L499.5 611.6 L499.7 612.8 L499.9 614.7 L500.2 612.0 L500.4 626.0 L500.6 617.4 L500.9 588.8 L501.1 612.1 L501.3 604.2 L501.6 609.1 L501.8 611.1 L502.0 617.5 L502.3 615.9 L502.5 616.4 L502.7 612.9 L503.0 612.9 L503.2 622.2 M503.7 610.6 L503.9 612.1 L504.2 614.1 L504.4 615.5 L504.6 610.6 L504.9 613.9 L505.1 599.9 L505.3 588.5 L505.6 623.9 L505.8 611.2 L506.0 598.0 L506.3 622.5 L506.5 613.4 L506.7 619.2 L507.0 614.8 L507.2 603.6 L507.5 622.0 L507.7 624.4 L507.9 625.5 L508.2 614.8 M508.6 612.9 L508.9 613.5 L509.1 620.2 L509.3 598.2 L509.6 612.4 L509.8 616.8 L510.0 611.8 L510.3 619.8 L510.5 614.6 L510.7 613.0 L511.0 612.1 L511.2 615.3 L511.5 618.3 L511.7 616.6 L511.9 617.7 L512.2 616.6 L512.4 615.3 L512.6 616.8 L512.9 618.6 L513.1 614.2 L513.3 614.0 L513.6 621.3 L513.8 610.8 L514.0 606.5 L514.3 612.0 L514.5 608.4 L514.7 617.8 L515.0 615.3 L515.2 618.0 L515.5 616.7 L515.7 618.0 L515.9 616.3 L516.2 617.6 L516.4 613.9 L516.6 613.8 L516.9 612.1 L517.1 609.1 L517.3 621.8 L517.6 626.4 L517.8 613.0 L518.0 579.9 L518.3 614.8 L518.5 622.7 L518.7 618.9 L519.0 615.4 L519.2 622.4 L519.5 618.3 L519.7 599.3 L519.9 617.1 L520.2 614.8 L520.4 609.3 L520.6 617.1 L520.9 618.1 L521.1 599.4 L521.3 622.5 L521.6 599.8 L521.8 601.4 L522.0 603.3 L522.3 610.6 L522.5 614.2 L522.7 610.1 L523.0 612.8 M523.5 611.4 L523.7 622.1 L523.9 621.6 L524.2 612.0 L524.4 612.7 L524.6 610.9 L524.9 623.3 L525.1 615.2 L525.3 604.6 L525.6 616.0 L525.8 607.4 L526.0 625.8 L526.3 615.8 L526.5 600.9 L526.7 617.9 L527.0 618.5 L527.2 616.7 L527.5 622.3 L527.7 593.6 L527.9 612.3 L528.2 621.6 L528.4 626.3 L528.6 598.5 L528.9 612.5 L529.1 613.3 L529.3 617.3 L529.6 609.5 L529.8 616.3 L530.0 620.5 L530.3 612.7 L530.5 615.7 L530.7 617.7 L531.0 617.2 L531.2 600.6 L531.5 621.1 L531.7 617.8 L531.9 622.5 L532.2 616.3 L532.4 614.0 L532.6 592.0 L532.9 618.2 L533.1 621.3 L533.3 610.3 L533.6 618.7 L533.8 614.4 L534.0 617.6 L534.3 625.0 L534.5 614.7 L534.7 621.7 L535.0 616.5 L535.2 617.9 L535.5 617.6 L535.7 599.6 L535.9 616.0 L536.2 613.0 L536.4 624.4 L536.6 614.5 L536.9 614.0 L537.1 608.8 L537.3 603.5 L537.6 627.1 L537.8 590.2 L538.0 615.2 L538.3 610.0 L538.5 627.4 L538.7 623.2 L539.0 614.8 L539.2 615.7 L539.5 616.7 L539.7 622.5 L539.9 614.4 L540.2 618.2 L540.4 578.2 L540.6 605.8 L540.9 573.0 L541.1 616.1 L541.3 614.6 L541.6 625.1 L541.8 596.6 L542.0 615.2 L542.3 610.8 L542.5 611.8 L542.7 611.7 L543.0 613.2 L543.2 621.3 L543.5 615.8 L543.7 627.1 L543.9 617.0 L544.2 615.8 L544.4 584.9 L544.6 615.9 L544.9 582.7 L545.1 614.5 L545.3 616.0 L545.6 617.7 L545.8 616.9 L546.0 617.4 L546.3 607.7 L546.5 617.3 L546.7 608.1 L547.0 613.3 L547.2 612.1 L547.4 617.7 L547.7 617.1 L547.9 615.9 L548.2 617.3 L548.4 600.2 L548.6 612.4 L548.9 627.4 L549.1 617.7 L549.3 624.7 L549.6 613.4 L549.8 627.5 L550.0 612.4 L550.3 614.8 L550.5 616.8 L550.7 625.2 L551.0 614.9 L551.2 607.9 L551.4 618.7 L551.7 570.9 L551.9 617.3 L552.2 617.0 L552.4 615.3 L552.6 618.9 L552.9 611.4 L553.1 612.2 L553.3 612.2 L553.6 620.9 L553.8 614.9 L554.0 617.9 L554.3 614.5 L554.5 613.3 L554.7 617.9 L555.0 615.5 L555.2 618.9 M555.7 605.9 L555.9 615.0 L556.2 614.7 L556.4 614.2 L556.6 613.3 L556.9 612.9 L557.1 611.3 L557.3 615.6 L557.6 624.4 L557.8 612.0 L558.0 623.2 L558.3 584.3 L558.5 597.6 L558.7 613.3 L559.0 609.5 L559.2 611.2 L559.4 606.3 L559.7 612.9 L559.9 614.1 L560.2 600.5 L560.4 622.5 L560.6 612.3 L560.9 609.3 L561.1 585.6 L561.3 621.0 L561.6 612.7 L561.8 612.5 L562.0 612.5 L562.3 615.3 L562.5 616.1 L562.7 616.7 L563.0 618.7 L563.2 619.2 L563.4 625.4 L563.7 627.2 L563.9 618.2 L564.2 622.0 L564.4 615.4 L564.6 609.9 L564.9 610.4 L565.1 615.2 L565.3 625.4 L565.6 613.7 L565.8 593.9 L566.0 611.5 L566.3 622.1 L566.5 599.9 L566.7 626.3 L567.0 614.1 L567.2 627.3 L567.4 614.7 L567.7 603.7 L567.9 615.2 L568.2 623.8 L568.4 625.9 L568.6 615.9 L568.9 616.2 L569.1 625.3 L569.3 621.6 L569.6 614.9 L569.8 625.2 L570.0 622.2 L570.3 615.7 L570.5 627.5 L570.7 618.6 L571.0 590.1 L571.2 612.6 L571.4 611.3 L571.7 622.2 L571.9 611.6 L572.2 616.8 L572.4 601.4 L572.6 616.6 L572.9 613.1 L573.1 562.4 L573.3 619.3 L573.6 618.0 L573.8 614.6 L574.0 611.4 L574.3 615.4 L574.5 616.1 L574.7 606.6 L575.0 625.6 L575.2 604.4 L575.4 615.3 L575.7 579.6 L575.9 614.8 L576.2 614.9 L576.4 623.5 L576.6 626.0 L576.9 613.6 L577.1 625.8 L577.3 618.6 L577.6 616.9 L577.8 622.6 L578.0 604.9 L578.3 624.0 L578.5 615.8 L578.7 624.2 L579.0 626.4 L579.2 598.4 L579.4 616.6 L579.7 617.6 L579.9 605.8 L580.2 616.8 L580.4 618.5 L580.6 615.9 L580.9 613.1 L581.1 619.8 L581.3 615.1 L581.6 617.4 L581.8 610.7 L582.0 607.1 L582.3 624.3 L582.5 597.6 L582.7 617.9 L583.0 612.4 M583.4 614.6 L583.7 622.9 M584.2 615.4 L584.4 605.8 L584.6 619.4 L584.9 597.5 L585.1 626.7 M585.6 612.0 L585.8 619.5 L586.0 590.9 L586.3 599.8 L586.5 612.9 L586.7 620.8 L587.0 622.1 L587.2 603.3 L587.4 617.1 L587.7 617.7 L587.9 604.1 L588.2 615.8 L588.4 617.5 L588.6 617.5 L588.9 619.1 L589.1 617.4 L589.3 606.0 L589.6 616.7 L589.8 621.0 L590.0 626.7 L590.3 616.6 L590.5 618.8 L590.7 618.7 L591.0 617.8 L591.2 615.0 L591.4 602.8 L591.7 618.0 L591.9 617.5 L592.2 622.1 L592.4 617.2 L592.6 616.4 L592.9 616.9 L593.1 617.5 L593.3 615.8 L593.6 617.9 L593.8 614.6 L594.0 617.1 L594.3 617.4 L594.5 618.1 L594.7 571.3 L595.0 625.9 L595.2 626.9 L595.4 617.2 L595.7 617.8 L595.9 617.0 L596.2 621.2 L596.4 619.8 L596.6 618.9 L596.9 618.1 L597.1 615.3 L597.3 617.9 L597.6 618.6 L597.8 616.0 L598.0 614.2 L598.3 615.1 L598.5 608.3 L598.7 616.2 L599.0 611.9 L599.2 614.0 L599.4 623.7 L599.7 617.9 L599.9 614.0 L600.1 616.9 L600.4 616.0 L600.6 610.3 L600.9 610.8 L601.1 626.5 L601.3 612.5 L601.6 626.5 L601.8 625.6 L602.0 611.2 L602.3 602.3 L602.5 613.2 L602.7 627.0 L603.0 614.9 L603.2 610.4 L603.4 599.5 L603.7 612.1 L603.9 612.6 L604.1 613.0 L604.4 614.6 L604.6 612.6 L604.9 620.7 L605.1 615.0 L605.3 617.9 L605.6 600.3 L605.8 617.5 L606.0 617.4 L606.3 617.2 L606.5 614.5 L606.7 615.5 L607.0 615.2 L607.2 614.5 L607.4 613.8 L607.7 612.4 L607.9 600.2 L608.1 598.3 L608.4 593.7 L608.6 612.7 L608.9 624.1 L609.1 610.7 L609.3 615.2 L609.6 616.3 L609.8 620.2 L610.0 617.4 M610.5 617.5 L610.7 616.5 L611.0 606.6 L611.2 617.9 L611.4 617.2 L611.7 614.6 L611.9 624.3 L612.1 615.0 L612.4 615.9 L612.6 616.1 L612.9 625.5 L613.1 615.4 L613.3 613.8 L613.6 615.9 L613.8 617.0 L614.0 612.0 L614.3 616.1 L614.5 617.1 L614.7 617.0 L615.0 618.0 L615.2 618.2 L615.4 625.2 L615.7 613.0 L615.9 616.3 L616.1 614.3 L616.4 612.3 L616.6 612.1 L616.9 613.8 L617.1 608.2 L617.3 599.1 L617.6 609.4 L617.8 604.9 L618.0 613.8 L618.3 608.4 L618.5 609.0 L618.7 604.1 L619.0 568.6 L619.2 608.3 L619.4 607.6 L619.7 597.3 L619.9 621.3 L620.1 605.7 L620.4 610.6 L620.6 611.7 L620.9 609.6 L621.1 614.9 L621.3 610.5 L621.6 613.8 L621.8 607.9 L622.0 612.4 L622.3 615.3 L622.5 609.7 L622.7 604.9 L623.0 616.8 L623.2 613.8 L623.4 600.6 L623.7 597.5 L623.9 613.1 L624.1 596.5 L624.4 590.7 L624.6 615.2 L624.9 608.2 L625.1 612.0 L625.3 607.0 L625.6 607.9 L625.8 613.2 L626.0 566.6 L626.3 609.3 L626.5 610.7 L626.7 605.6 L627.0 600.3 L627.2 610.1 L627.4 600.2 L627.7 609.2 L627.9 606.0 L628.1 606.4 L628.4 609.3 L628.6 609.0 L628.9 599.3 L629.1 601.3 L629.3 616.8 L629.6 593.9 L629.8 605.0 L630.0 602.1 L630.3 612.9 L630.5 602.9 L630.7 611.4 L631.0 605.9 L631.2 610.0 L631.4 578.3 L631.7 617.4 L631.9 600.3 L632.1 605.1 L632.4 572.8 L632.6 611.9 L632.9 591.5 L633.1 613.1 L633.3 605.7 L633.6 610.9 L633.8 611.0 L634.0 606.1 L634.3 595.2 L634.5 609.5 L634.7 603.1 L635.0 611.5 L635.2 612.6 L635.4 600.8 L635.7 606.6 L635.9 591.0 L636.1 599.2 L636.4 612.1 L636.6 607.4 L636.9 604.8 L637.1 616.8 L637.3 609.2 L637.6 608.9 L637.8 595.0 L638.0 606.6 L638.3 604.0 L638.5 602.3 L638.7 602.0 L639.0 603.7 L639.2 591.2 L639.4 597.1 L639.7 611.6 L639.9 600.4 L640.1 606.8 L640.4 609.9 L640.6 606.6 L640.9 605.1 L641.1 600.7 L641.3 593.3 L641.6 598.9 L641.8 606.9 L642.0 603.7 M642.5 608.7 L642.7 586.1 L643.0 602.4 L643.2 605.2 L643.4 599.5 L643.7 602.4 L643.9 589.7 L644.1 603.6 L644.4 603.1 L644.6 603.2 L644.9 596.9 L645.1 598.5 L645.3 603.1 L645.6 600.8 L645.8 607.8 L646.0 602.2 L646.3 590.8 L646.5 601.8 L646.7 598.6 L647.0 574.3 L647.2 602.1 L647.4 603.4 L647.7 595.2 L647.9 594.1 L648.1 604.4 L648.4 598.9 L648.6 595.2 L648.9 616.2 L649.1 577.8 L649.3 604.2 L649.6 603.8 L649.8 603.2 L650.0 603.9 L650.3 606.5 L650.5 599.8 L650.7 608.8 L651.0 608.8 L651.2 594.4 L651.4 565.3 L651.7 607.4 L651.9 616.5 L652.1 594.6 L652.4 610.7 L652.6 603.0 L652.8 600.2 L653.1 603.7 L653.3 607.3 L653.6 610.1 L653.8 612.3 L654.0 605.1 L654.3 591.6 L654.5 606.9 L654.7 612.2 L655.0 582.9 M655.4 609.4 L655.7 608.1 L655.9 604.8 L656.1 599.2 L656.4 601.5 L656.6 602.9 L656.8 601.4 L657.1 618.6 L657.3 605.5 L657.6 600.6 L657.8 601.4 L658.0 605.4 L658.3 605.0 L658.5 605.6 L658.7 600.1 L659.0 599.4 L659.2 599.2 L659.4 595.9 L659.7 601.3 L659.9 592.1 M660.4 580.4 L660.6 606.0 L660.8 593.9 L661.1 602.1 L661.3 600.0 L661.6 612.8 L661.8 602.5 L662.0 595.7 L662.3 585.4 L662.5 585.1 L662.7 598.7 L663.0 573.4 L663.2 582.3 L663.4 595.3 L663.7 600.9 L663.9 567.2 L664.1 604.9 L664.4 579.3 L664.6 601.7 L664.8 580.3 L665.1 605.5 L665.3 613.9 L665.6 606.1 L665.8 597.2 L666.0 587.5 L666.3 605.5 L666.5 608.1 L666.7 605.3 L667.0 603.6 L667.2 596.2 L667.4 593.9 L667.7 607.8 L667.9 599.1 L668.1 591.6 L668.4 577.5 L668.6 598.5 L668.8 602.2 L669.1 592.2 L669.3 599.5 L669.6 595.1 L669.8 608.0 L670.0 596.4 L670.3 600.6 L670.5 601.7 L670.7 600.6 L671.0 601.2 L671.2 592.8 L671.4 601.9 L671.7 600.8 L671.9 604.7 L672.1 604.7 L672.4 606.9 L672.6 595.6 L672.8 591.4 L673.1 575.4 L673.3 600.0 L673.6 590.2 L673.8 603.3 L674.0 585.8 L674.3 606.5 L674.5 605.9 L674.7 597.6 L675.0 602.2 L675.2 599.7 L675.4 605.0 L675.7 610.3 L675.9 599.8 L676.1 603.0 L676.4 571.5 L676.6 606.0 L676.8 605.3 L677.1 603.5 L677.3 604.9 L677.6 605.9 L677.8 590.6 L678.0 580.7 L678.3 608.9 L678.5 603.4 L678.7 603.9 L679.0 602.6 L679.2 598.0 L679.4 602.9 L679.7 602.0 L679.9 598.2 L680.1 589.8 L680.4 601.4 L680.6 605.6 L680.8 592.7 L681.1 601.7 L681.3 599.1 L681.6 595.9 L681.8 571.0 L682.0 606.7 L682.3 596.3 L682.5 598.6 L682.7 601.2 L683.0 590.9 L683.2 609.1 L683.4 591.4 L683.7 596.0 L683.9 602.8 L684.1 606.5 M684.6 597.8 L684.8 566.4 L685.1 605.7 L685.3 605.5 L685.6 579.8 L685.8 598.4 L686.0 603.2 L686.3 592.1 L686.5 584.8 L686.7 586.5 L687.0 601.1 M687.4 578.9 L687.7 582.9 L687.9 594.3 L688.1 567.6 M688.6 600.8 L688.8 593.5 L689.1 600.6 L689.3 580.4 L689.6 597.6 L689.8 582.2 L690.0 594.8 L690.3 600.4 L690.5 590.0 L690.7 600.7 L691.0 604.6 L691.2 587.1 L691.4 588.8 L691.7 587.6 L691.9 602.0 L692.1 607.7 L692.4 579.0 L692.6 605.8 L692.8 604.6 L693.1 605.6 L693.3 594.6 L693.6 590.6 L693.8 602.9 L694.0 586.2 L694.3 572.3 M694.7 604.8 L695.0 599.9 L695.2 599.7 L695.4 592.1 L695.7 600.7 L695.9 597.2 L696.1 601.6 L696.4 601.5 L696.6 604.0 L696.8 601.4 L697.1 604.4 L697.3 601.8 L697.6 593.3 L697.8 595.7 L698.0 570.5 L698.3 593.0 L698.5 578.3 L698.7 600.6 L699.0 606.4 L699.2 598.2 L699.4 594.0 L699.7 588.7 L699.9 570.3 L700.1 594.9 L700.4 563.3 L700.6 567.1 L700.8 598.7 L701.1 603.2 L701.3 576.5 L701.6 575.6 L701.8 585.9 L702.0 599.2 L702.3 600.0 L702.5 591.4 L702.7 598.8 L703.0 596.0 L703.2 607.0 L703.4 599.4 L703.7 602.0 L703.9 599.0 L704.1 612.6 L704.4 588.0 L704.6 590.5 L704.8 603.4 L705.1 596.2 L705.3 600.2 L705.5 594.7 L705.8 599.1 L706.0 598.1 L706.3 604.6 L706.5 603.4 L706.7 600.5 L707.0 601.4 L707.2 599.4 L707.4 602.4 L707.7 594.5 L707.9 586.5 L708.1 601.4 L708.4 578.7 L708.6 583.2 L708.8 596.2 L709.1 596.6 L709.3 573.4 L709.5 586.0 L709.8 596.9 L710.0 591.9 L710.3 590.7 L710.5 591.8 L710.7 573.9 L711.0 591.3 L711.2 604.4 L711.4 608.2 L711.7 614.1 L711.9 601.2 L712.1 602.0 L712.4 603.4 L712.6 583.2 L712.8 592.4 L713.1 594.5 L713.3 595.7 L713.5 594.6 L713.8 586.1 L714.0 598.5 L714.3 597.0 L714.5 585.6 L714.7 589.1 L715.0 590.7 M715.4 588.0 L715.7 598.4 L715.9 599.7 L716.1 597.6 L716.4 600.0 L716.6 599.6 L716.8 610.5 L717.1 592.9 L717.3 602.2 L717.5 591.8 L717.8 582.3 L718.0 582.2 L718.3 595.9 L718.5 599.4 L718.7 596.1 L719.0 592.6 M719.4 586.5 L719.7 596.8 L719.9 595.4 L720.1 593.6 L720.4 592.5 L720.6 566.6 L720.8 594.2 L721.1 600.3 L721.3 599.2 L721.5 599.6 L721.8 602.0 L722.0 597.5 M722.5 579.3 L722.7 602.1 L723.0 596.6 L723.2 598.0 M723.7 603.4 L723.9 586.3 L724.1 590.6 L724.4 602.7 L724.6 595.8 L724.8 601.3 L725.1 610.0 L725.3 581.6 L725.5 563.2 L725.8 583.8 L726.0 563.3 L726.3 601.6 L726.5 597.6 L726.7 598.3 L727.0 602.1 L727.2 606.7 L727.4 600.4 L727.7 597.8 L727.9 600.7 L728.1 587.8 L728.4 604.2 L728.6 599.9 L728.8 602.8 L729.1 593.0 L729.3 601.6 L729.5 601.6 L729.8 576.6 L730.0 598.3 L730.3 601.5 L730.5 593.5 L730.7 611.2 L731.0 607.2 L731.2 562.6 L731.4 592.4 L731.7 577.0 L731.9 595.1 L732.1 602.1 L732.4 601.0 L732.6 600.3 L732.8 592.8 L733.1 582.8 L733.3 599.2 L733.5 585.4 L733.8 600.4 L734.0 599.9 L734.3 594.5 L734.5 594.5 L734.7 586.3 L735.0 600.8 L735.2 590.6 L735.4 599.6 L735.7 594.8 L735.9 593.3 L736.1 584.6 L736.4 596.6 L736.6 600.6 L736.8 600.7 L737.1 602.6 L737.3 597.3 L737.5 589.1 L737.8 600.1 L738.0 583.3 L738.3 592.5 L738.5 601.3 L738.7 579.7 L739.0 602.9 L739.2 599.8 L739.4 603.6 L739.7 585.8 L739.9 570.8 L740.1 591.2 L740.4 603.3 L740.6 598.5 L740.8 605.6 L741.1 609.8 L741.3 609.4 L741.5 592.0 L741.8 601.9 L742.0 598.1 L742.3 607.3 L742.5 604.2 L742.7 579.2 L743.0 600.8 L743.2 586.6 L743.4 574.3 L743.7 609.4 L743.9 599.0 L744.1 597.2 L744.4 601.1 L744.6 595.2 L744.8 596.4 L745.1 600.1 L745.3 580.6 L745.5 606.4 L745.8 596.4 L746.0 596.6 L746.3 593.0 L746.5 583.2 L746.7 587.0 L747.0 564.1 L747.2 595.5 L747.4 596.4 L747.7 594.2 L747.9 583.6 L748.1 600.5 L748.4 609.8 L748.6 600.5 L748.8 589.2 L749.1 591.4 L749.3 600.1 L749.5 595.0 L749.8 595.1 L750.0 592.5 L750.3 596.4 L750.5 597.3 L750.7 580.7 L751.0 598.4 L751.2 598.5 L751.4 595.1 L751.7 589.5 L751.9 595.1 L752.1 586.8 L752.4 599.4 L752.6 597.0 L752.8 600.0 L753.1 597.9 L753.3 603.0 L753.5 575.5 L753.8 602.2 L754.0 593.9 L754.3 595.4 M754.7 603.7 L755.0 587.0 L755.2 605.1 L755.4 599.1 L755.7 586.7 L755.9 599.4 L756.1 584.8 L756.4 586.1 L756.6 600.3 L756.8 588.4 L757.1 602.6 L757.3 581.2 L757.5 601.5 L757.8 584.6 L758.0 600.6 L758.2 596.4 L758.5 606.7 L758.7 602.9 L759.0 599.7 L759.2 599.2 L759.4 596.7 L759.7 604.0 L759.9 600.2 L760.1 594.9 L760.4 599.6 L760.6 592.2 L760.8 604.0 L761.1 596.0 L761.3 601.1 L761.5 598.9 L761.8 597.5 L762.0 597.8 L762.2 598.0 L762.5 604.4 L762.7 599.6 L763.0 598.8 M763.4 591.4 L763.7 594.8 L763.9 598.9 L764.1 600.8 L764.4 599.4 L764.6 607.2 L764.8 601.7 L765.1 601.2 L765.3 600.2 L765.5 587.1 L765.8 599.8 L766.0 600.8 L766.2 591.0 L766.5 601.1 L766.7 593.8 L767.0 604.5 L767.2 600.1 L767.4 602.4 L767.7 597.6 L767.9 599.2 L768.1 592.9 L768.4 593.5 L768.6 590.8 L768.8 578.6 L769.1 600.6 L769.3 600.6 L769.5 598.4 L769.8 600.1 L770.0 593.4 L770.2 591.9 L770.5 600.7 L770.7 597.6 L771.0 607.1 L771.2 604.3 L771.4 601.8 L771.7 602.2 L771.9 601.2 L772.1 591.4 L772.4 602.0 L772.6 599.9 L772.8 586.8 L773.1 597.6 L773.3 596.5 L773.5 601.4 L773.8 586.3 L774.0 579.4 L774.2 593.7 L774.5 589.2 L774.7 586.5 L775.0 607.1 L775.2 580.3 L775.4 600.5 L775.7 588.6 L775.9 603.0 L776.1 603.3 L776.4 593.1 L776.6 603.0 L776.8 609.0 L777.1 610.7 L777.3 604.1 L777.5 603.4 L777.8 601.7 L778.0 597.9 L778.2 602.6 L778.5 601.7 L778.7 592.1 L779.0 596.6 L779.2 600.3 L779.4 601.9 L779.7 605.7 L779.9 592.7 L780.1 571.2 L780.4 569.4 L780.6 594.2 L780.8 602.9 L781.1 597.7 M781.5 600.9 L781.8 603.5 L782.0 593.0 L782.2 580.4 L782.5 591.1 L782.7 595.0 L783.0 579.3 L783.2 604.3 L783.4 584.7 L783.7 606.7 L783.9 599.0 L784.1 601.9 L784.4 599.0 L784.6 606.6 L784.8 587.5 L785.1 593.8 L785.3 603.0 L785.5 594.3 L785.8 598.3 L786.0 595.1 L786.2 596.8 L786.5 601.5 L786.7 600.0 L787.0 596.2 L787.2 605.9 L787.4 601.3 L787.7 597.5 L787.9 602.8 L788.1 586.1 L788.4 601.4 L788.6 599.7 L788.8 604.0 L789.1 594.0 L789.3 602.8 L789.5 601.7 L789.8 605.5 L790.0 597.0 L790.2 601.2 L790.5 605.4 L790.7 579.7 L791.0 605.9 L791.2 596.1 L791.4 600.4 L791.7 599.8 L791.9 595.2 L792.1 599.5 L792.4 564.9 L792.6 581.2 L792.8 602.5 L793.1 598.2 L793.3 598.6 L793.5 588.9 L793.8 599.9 L794.0 605.6 L794.2 602.3 L794.5 613.9 L794.7 603.6 L795.0 607.4 L795.2 604.5 M795.7 604.5 L795.9 615.0 L796.1 605.9 L796.4 605.6 L796.6 616.1 L796.8 604.1 L797.1 575.1 L797.3 616.2 L797.5 607.6 L797.8 599.5 L798.0 599.6 L798.2 573.6 L798.5 608.9 L798.7 598.4 L799.0 609.5 L799.2 599.4 L799.4 604.2 L799.7 608.4 L799.9 606.9 L800.1 598.0 L800.4 607.3 L800.6 606.1 L800.8 609.8 L801.1 604.5 L801.3 608.0 L801.5 595.3 L801.8 600.5 L802.0 591.2 L802.2 602.9 L802.5 603.1 L802.7 607.8 L803.0 606.1 L803.2 594.3 L803.4 596.8 L803.7 606.1 L803.9 609.7 L804.1 606.2 L804.4 611.7 L804.6 598.4 L804.8 607.3 L805.1 609.6 L805.3 608.7 L805.5 602.8 L805.8 603.9 L806.0 590.0 L806.2 600.5 L806.5 607.4 L806.7 599.2 L807.0 606.9 L807.2 605.5 L807.4 606.5 L807.7 607.3 L807.9 598.1 L808.1 609.3 L808.4 607.3 L808.6 593.0 L808.8 607.7 L809.1 607.0 L809.3 594.3 L809.5 605.7 L809.8 597.0 L810.0 606.8 L810.2 607.1 L810.5 606.5 L810.7 606.1 L810.9 574.3 L811.2 566.2 L811.4 607.4 L811.7 605.4 L811.9 607.2 L812.1 603.9 L812.4 602.4 L812.6 598.6 L812.8 591.5 L813.1 605.0 L813.3 605.1 L813.5 588.6 L813.8 594.6 L814.0 595.3 L814.2 590.8 L814.5 585.9 L814.7 602.8 L814.9 593.4 L815.2 604.8 L815.4 604.2 L815.7 590.2 L815.9 612.2 L816.1 606.8 L816.4 608.8 L816.6 592.4 L816.8 598.9 L817.1 604.7 L817.3 599.3 L817.5 603.6 L817.8 586.0 L818.0 600.2 L818.2 614.2 L818.5 603.6 L818.7 605.4 L818.9 602.8 L819.2 601.7 L819.4 610.5 L819.7 593.1 L819.9 602.7 L820.1 592.9 L820.4 597.9 L820.6 608.3 L820.8 605.8 L821.1 601.8 L821.3 599.1 L821.5 614.1 L821.8 570.5 L822.0 597.3 L822.2 599.2 L822.5 605.4 L822.7 603.3 L822.9 605.9 L823.2 597.9 L823.4 604.0 L823.7 598.7 L823.9 592.2 L824.1 588.7 L824.4 605.9 L824.6 576.4 L824.8 572.2 L825.1 581.4 L825.3 599.7 L825.5 590.7 L825.8 602.2 L826.0 592.8 L826.2 600.9 L826.5 598.4 L826.7 607.5 L826.9 606.5 L827.2 607.1 L827.4 608.7 L827.7 605.1 L827.9 594.5 L828.1 604.8 L828.4 598.5 L828.6 604.2 L828.8 608.2 L829.1 599.1 L829.3 593.7 L829.5 601.2 L829.8 608.4 L830.0 605.7 L830.2 595.0 L830.5 607.3 L830.7 609.2 L830.9 604.1 L831.2 596.5 L831.4 608.6 L831.7 607.5 L831.9 595.3 L832.1 600.4 L832.4 599.3 L832.6 602.1 L832.8 597.6 L833.1 600.0 L833.3 604.9 L833.5 600.7 L833.8 601.8 L834.0 587.9 L834.2 602.8 L834.5 567.7 L834.7 594.3 L834.9 604.2 L835.2 588.9 L835.4 608.6 L835.7 604.1 L835.9 601.7 L836.1 602.0 L836.4 604.0 L836.6 572.3 L836.8 604.3 L837.1 604.6 L837.3 595.7 L837.5 613.2 L837.8 606.8 L838.0 604.3 L838.2 588.1 L838.5 601.9 L838.7 598.1 L838.9 612.7 L839.2 602.3 L839.4 599.1 L839.7 596.1 L839.9 589.9 L840.1 562.5 L840.4 598.7 L840.6 595.3 L840.8 590.3 L841.1 597.2 L841.3 602.4 L841.5 602.1 L841.8 589.0 L842.0 578.5 L842.2 601.3 L842.5 604.7 L842.7 603.8 L842.9 602.8 L843.2 601.7 L843.4 604.8 L843.7 601.5 L843.9 605.1 M844.4 601.5 L844.6 599.4 L844.8 573.1 L845.1 574.3 L845.3 607.1 L845.5 605.9 L845.8 606.1 L846.0 594.7 L846.2 603.8 L846.5 609.4 L846.7 609.9 L846.9 588.9 L847.2 582.1 L847.4 609.4 L847.7 597.6 L847.9 600.6 M848.4 604.3 L848.6 596.4 L848.8 604.0 L849.1 601.5 L849.3 586.5 L849.5 594.2 L849.8 604.3 L850.0 595.8 L850.2 608.9 L850.5 611.5 L850.7 613.1 L850.9 607.0 L851.2 610.5 L851.4 608.3 L851.7 611.3 L851.9 611.1 L852.1 598.9 L852.4 603.6 L852.6 616.1 L852.8 611.8 L853.1 618.9 L853.3 602.8 L853.5 611.5 L853.8 604.4 L854.0 608.5 L854.2 619.8 L854.5 593.3 L854.7 598.1 L854.9 603.6 L855.2 606.6 L855.4 602.6 L855.7 605.2 L855.9 607.3 L856.1 601.5 L856.4 597.5 L856.6 605.7 L856.8 604.4 L857.1 576.8 L857.3 601.5 L857.5 587.8 L857.8 605.4 L858.0 596.0 L858.2 604.6 L858.5 606.1 L858.7 602.9 L858.9 602.0 L859.2 604.1 L859.4 606.6 L859.7 605.0 L859.9 606.7 L860.1 606.5 L860.4 608.5 L860.6 605.5 L860.8 598.4 L861.1 610.0 L861.3 604.8 L861.5 615.7 L861.8 594.6 L862.0 609.9 L862.2 608.2 L862.5 608.2 L862.7 612.9 L862.9 606.4 L863.2 614.9 L863.4 606.5 L863.6 611.2 M864.1 618.6 L864.4 609.0 M864.8 606.5 L865.1 599.1 L865.3 593.7 L865.5 607.5 L865.8 600.3 L866.0 597.2 L866.2 600.7 L866.5 604.9 L866.7 601.3 L866.9 618.8 L867.2 610.9 L867.4 606.5 L867.6 598.4 L867.9 607.8 L868.1 603.4 L868.4 613.7 L868.6 613.9 L868.8 604.8 L869.1 612.2 L869.3 609.2 L869.5 608.6 L869.8 564.7 L870.0 602.7 L870.2 595.5 L870.5 604.4 L870.7 592.3 L870.9 588.0 L871.2 599.5 L871.4 602.1 L871.6 570.5 L871.9 606.9 L872.1 609.1 L872.4 603.0 L872.6 606.2 L872.8 601.9 L873.1 618.5 L873.3 617.1 L873.5 598.8 L873.8 609.5 L874.0 594.1 L874.2 609.1 L874.5 614.1 L874.7 621.0 L874.9 611.6 L875.2 607.1 L875.4 615.0 L875.6 611.9 L875.9 600.7 L876.1 610.8 L876.4 608.3 L876.6 604.5 L876.8 606.9 L877.1 611.3 L877.3 611.3 L877.5 591.6 L877.8 588.5 L878.0 607.4 L878.2 604.2 L878.5 604.8 L878.7 602.4 L878.9 606.0 L879.2 599.9 L879.4 604.2 L879.6 595.6 L879.9 602.0 L880.1 597.9 L880.4 607.2 L880.6 598.9 L880.8 595.9 L881.1 606.6 L881.3 600.5 L881.5 601.0 L881.8 603.0 L882.0 606.0 L882.2 604.7 L882.5 597.1 L882.7 602.5 L882.9 591.4 L883.2 615.3 L883.4 602.6 L883.6 607.8 M884.1 612.4 L884.4 601.4 L884.6 609.5 L884.8 599.8 L885.1 572.0 L885.3 604.7 L885.5 605.6 L885.8 597.3 L886.0 599.6 M886.5 605.4 L886.7 597.5 L886.9 598.0 L887.2 602.2 L887.4 607.1 L887.6 606.5 L887.9 584.8 L888.1 603.9 L888.4 593.5 L888.6 608.9 L888.8 608.8 L889.1 608.5 L889.3 595.4 L889.5 606.8 L889.8 601.8 L890.0 597.5 L890.2 605.6 L890.5 600.6 L890.7 607.3 L890.9 608.3 L891.2 607.1 L891.4 606.1 L891.6 607.5 L891.9 603.5 L892.1 594.0 L892.4 595.2 L892.6 607.4 L892.8 593.7 L893.1 593.0 L893.3 606.9 L893.5 596.7 L893.8 600.9 L894.0 601.6 L894.2 606.1 L894.5 602.6 L894.7 599.4 L894.9 602.8 L895.2 605.7 L895.4 612.7 L895.6 601.7 L895.9 607.0 L896.1 602.4 L896.4 605.9 L896.6 598.4 L896.8 600.1 L897.1 581.2 L897.3 597.0 L897.5 584.8 L897.8 609.2 L898.0 600.9 L898.2 593.1 L898.5 597.7 L898.7 582.7 L898.9 586.3 L899.2 599.1 L899.4 603.5 M899.9 602.2 L900.1 598.6 L900.4 597.3 L900.6 608.8 L900.8 595.9 L901.1 607.2 L901.3 599.9 L901.5 602.6 L901.8 606.1 L902.0 600.9 L902.2 595.5 L902.5 606.6 L902.7 608.3 L902.9 607.5 L903.2 574.7 L903.4 603.7 L903.6 605.2 L903.9 603.9 L904.1 604.8 L904.4 597.9 L904.6 598.4 L904.8 602.9 L905.1 604.3 L905.3 577.9 L905.5 582.9 L905.8 591.0 L906.0 605.5 L906.2 598.1 L906.5 599.6 M906.9 604.4 L907.2 598.6 M907.6 591.7 L907.9 608.6 L908.1 614.8 M908.6 611.6 L908.8 604.9 L909.1 608.2 L909.3 594.8 L909.5 604.3 L909.8 594.2 L910.0 600.6 L910.2 596.5 L910.5 601.3 L910.7 605.8 L910.9 603.4 L911.2 595.5 L911.4 594.5 L911.6 595.3 L911.9 596.3 L912.1 580.6 L912.4 601.1 L912.6 564.0 L912.8 594.4 L913.1 599.6 L913.3 596.2 L913.5 601.5 L913.8 600.6 L914.0 588.7 L914.2 601.8 L914.5 591.6 L914.7 595.1 L914.9 593.8 L915.2 603.3 L915.4 595.2 L915.6 594.7 L915.9 595.2 L916.1 598.1 L916.3 605.7 L916.6 603.6 L916.8 587.2 L917.1 609.5 L917.3 602.0 L917.5 610.1 L917.8 601.2 L918.0 604.5 L918.2 580.1 L918.5 599.8 L918.7 584.4 L918.9 604.3 L919.2 602.5 L919.4 596.8 L919.6 595.5 L919.9 603.9 L920.1 590.1 L920.3 599.8 L920.6 592.7 L920.8 603.7 L921.1 613.9 L921.3 600.9 L921.5 599.6 L921.8 598.1 L922.0 601.5 L922.2 611.0 M922.7 607.3 L922.9 570.2 L923.2 599.0 L923.4 605.0 L923.6 592.1 L923.9 608.8 L924.1 607.6 L924.3 605.4 L924.6 600.3 L924.8 604.7 L925.1 578.4 L925.3 610.5 L925.5 597.5 L925.8 595.3 L926.0 604.4 L926.2 610.7 L926.5 591.9 L926.7 605.0 L926.9 614.6 L927.2 603.1 L927.4 599.4 L927.6 585.1 L927.9 578.7 L928.1 600.0 L928.3 584.9 L928.6 596.7 L928.8 604.6 L929.1 614.7 L929.3 596.5 L929.5 599.3 L929.8 603.0 L930.0 600.2 L930.2 603.6 L930.5 602.3 L930.7 598.2 L930.9 604.1 L931.2 602.4 L931.4 590.9 L931.6 604.4 L931.9 613.7 L932.1 598.8 L932.3 606.6 L932.6 606.1 L932.8 581.3 L933.1 596.8 L933.3 605.9 L933.5 575.5 L933.8 603.3 L934.0 603.3 L934.2 599.7 L934.5 603.3 L934.7 607.9 L934.9 593.0 L935.2 612.6 L935.4 611.3 L935.6 587.5 L935.9 605.8 L936.1 606.7 L936.3 603.6 L936.6 598.0 L936.8 603.1 L937.1 588.6 L937.3 611.4 L937.5 606.4 L937.8 588.7 L938.0 605.5 L938.2 605.5 L938.5 585.1 L938.7 599.3 L938.9 595.1 L939.2 604.1 L939.4 601.8 L939.6 585.4 L939.9 580.2 L940.1 594.1 L940.3 572.2 L940.6 585.2 L940.8 590.3 L941.1 564.0 L941.3 599.3 L941.5 600.2 L941.8 595.2 L942.0 578.5 L942.2 591.4 M942.7 599.5" fill="none" stroke="#f2563e" stroke-width="2" marker-start="url(#sq)" marker-mid="url(#sq)" marker-end="url(#sq)"/>
<rect x="91" y="557" width="852.2" height="5" fill="#45b4f0"/>
<polyline points="91.5,616.8 91.7,615.0 92.0,614.6 92.2,624.4 92.4,599.6 92.7,614.6 92.9,566.7 93.1,606.0 93.4,613.3 93.6,609.5 93.9,614.4 94.1,547.3 94.3,619.1 94.6,605.3 94.8,618.5 95.0,614.0 95.3,617.2 95.5,623.8 95.7,606.6 96.0,614.2 96.2,592.8 96.4,600.4 96.7,607.9 96.9,615.3 97.1,612.6 97.4,612.6 97.6,613.9 97.9,611.6 98.1,613.5 98.3,611.5 98.6,602.8 98.8,614.6 99.0,614.1 99.3,614.3 99.5,625.2 99.7,612.3 100.0,624.9 100.2,616.4 100.4,615.6 100.7,614.1 100.9,610.7 101.1,623.5 101.4,614.5 101.6,615.4 101.9,614.9 102.1,615.3 102.3,609.8 102.6,614.0 102.8,608.1 103.0,623.4 103.3,609.4 103.5,616.0 103.7,619.1 104.0,596.7 104.2,611.7 104.4,612.4 104.7,612.1 104.9,610.2 105.1,564.8 105.4,612.3 105.6,612.6 105.9,531.0 106.1,611.1 106.3,619.3 106.6,440.2 106.8,600.8 107.0,616.5 107.3,601.8 107.5,614.8 107.7,615.1 108.0,610.0 108.2,546.3 108.4,610.8 108.7,612.3 108.9,613.4 109.1,612.2 109.4,601.4 109.6,612.5 109.9,614.9 110.1,598.1 110.3,620.2 110.6,614.5 110.8,615.5 111.0,623.7 111.3,616.2 111.5,607.8 111.7,618.0 112.0,623.8 112.2,616.7 112.4,615.7 112.7,616.5 112.9,563.1 113.1,620.3 113.4,616.1 113.6,613.7 113.9,610.3 114.1,623.7 114.3,605.3 114.6,610.6 114.8,614.0 115.0,613.5 115.3,617.5 115.5,612.5 115.7,614.6 116.0,621.1 116.2,603.3 116.4,611.6 116.7,611.1 116.9,611.3 117.1,621.2 117.4,606.5 117.6,556.0 117.9,614.5 118.1,614.8 118.3,619.8 118.6,626.3 118.8,580.4 119.0,616.2 119.3,614.3 119.5,616.3 119.7,623.6 120.0,608.6 120.2,604.9 120.4,611.9 120.7,601.6 120.9,613.8 121.1,612.4 121.4,611.1 121.6,618.6 121.8,614.8 122.1,610.4 122.3,610.5 122.6,613.3 122.8,614.7 123.0,612.5 123.3,615.8 123.5,608.6 123.7,612.6 124.0,621.4 124.2,611.2 124.4,626.0 124.7,608.1 124.9,613.4 125.1,610.8 125.4,602.8 125.6,611.0 125.8,626.8 126.1,621.4 126.3,623.4 126.6,612.3 126.8,599.7 127.0,607.7 127.3,608.4 127.5,609.9 127.7,615.8 128.0,614.1 128.2,615.4 128.4,614.2 128.7,616.7 128.9,614.1 129.1,579.8 129.4,609.8 129.6,615.1 129.8,618.0 130.1,620.1 130.3,600.5 130.6,618.1 130.8,612.3 131.0,623.9 131.3,611.9 131.5,623.3 131.7,616.1 132.0,627.0 132.2,617.3 132.4,618.3 132.7,626.3 132.9,623.1 133.1,608.2 133.4,609.0 133.6,610.8 133.8,610.0 134.1,615.4 134.3,614.4 134.6,617.4 134.8,613.1 135.0,617.2 135.3,615.6 135.5,621.2 135.7,616.4 136.0,613.8 136.2,568.4 136.4,605.1 136.7,626.7 136.9,609.2 137.1,616.5 137.4,611.1 137.6,579.1 137.8,612.7 138.1,624.0 138.3,617.4 138.6,615.7 138.8,611.2 139.0,611.2 139.3,625.6 139.5,614.7 139.7,611.9 140.0,586.1 140.2,614.4 140.4,610.8 140.7,621.8 140.9,615.1 141.1,624.0 141.4,614.2 141.6,604.6 141.8,592.9 142.1,620.5 142.3,623.3 142.6,617.8 142.8,615.5 143.0,618.1 143.3,616.7 143.5,617.5 143.7,617.7 144.0,583.4 144.2,615.5 144.4,614.3 144.7,614.6 144.9,613.6 145.1,604.1 145.4,626.7 145.6,614.4 145.8,608.2 146.1,612.9 146.3,602.8 146.6,612.3 146.8,614.4 147.0,611.9 147.3,626.3 147.5,611.6 147.7,610.3 148.0,623.6 148.2,602.8 148.4,612.1 148.7,613.6 148.9,612.7 149.1,612.6 149.4,615.7 149.6,614.4 149.8,601.0 150.1,614.6 150.3,625.9 150.6,601.5 150.8,619.7 151.0,604.9 151.3,621.2 151.5,603.1 151.7,612.7 152.0,618.7 152.2,607.2 152.4,615.3 152.7,601.6 152.9,614.0 153.1,626.0 153.4,626.5 153.6,619.1 153.8,612.5 154.1,615.7 154.3,614.8 154.6,621.2 154.8,610.7 155.0,616.7 155.3,621.1 155.5,556.0 155.7,617.5 156.0,614.1 156.2,616.4 156.4,625.3 156.7,614.4 156.9,613.1 157.1,622.7 157.4,565.3 157.6,615.1 157.8,611.3 158.1,614.7 158.3,601.5 158.6,617.7 158.8,614.9 159.0,598.7 159.3,615.3 159.5,613.1 159.7,617.0 160.0,616.7 160.2,619.5 160.4,617.4 160.7,619.8 160.9,617.9 161.1,625.2 161.4,619.9 161.6,614.7 161.8,614.6 162.1,622.3 162.3,617.1 162.6,602.9 162.8,614.2 163.0,616.2 163.3,617.4 163.5,627.4 163.7,613.8 164.0,619.6 164.2,608.4 164.4,617.5 164.7,614.7 164.9,628.4 165.1,619.8 165.4,626.7 165.6,617.8 165.8,609.9 166.1,608.8 166.3,619.0 166.6,618.9 166.8,604.8 167.0,626.6 167.3,616.0 167.5,614.6 167.7,613.9 168.0,618.2 168.2,533.7 168.4,624.4 168.7,622.0 168.9,619.1 169.1,611.5 169.4,615.2 169.6,622.8 169.8,610.6 170.1,618.3 170.3,615.8 170.6,593.4 170.8,617.3 171.0,615.5 171.3,603.0 171.5,616.3 171.7,615.2 172.0,618.9 172.2,614.2 172.4,612.8 172.7,615.7 172.9,599.3 173.1,612.8 173.4,626.3 173.6,607.5 173.8,605.6 174.1,566.6 174.3,601.8 174.5,620.6 174.8,608.3 175.0,611.8 175.3,612.7 175.5,611.9 175.7,610.7 176.0,597.5 176.2,607.5 176.4,608.4 176.7,623.5 176.9,591.9 177.1,626.1 177.4,607.2 177.6,611.3 177.8,610.5 178.1,613.7 178.3,612.9 178.5,551.3 178.8,616.4 179.0,601.3 179.3,613.3 179.5,622.3 179.7,596.2 180.0,615.3 180.2,616.6 180.4,613.4 180.7,615.4 180.9,615.3 181.1,610.5 181.4,613.8 181.6,622.6 181.8,625.9 182.1,590.2 182.3,616.8 182.5,617.4 182.8,600.3 183.0,614.7 183.3,615.0 183.5,614.1 183.7,615.2 184.0,624.8 184.2,616.1 184.4,533.0 184.7,617.9 184.9,614.8 185.1,616.4 185.4,613.3 185.6,610.4 185.8,611.9 186.1,593.6 186.3,613.4 186.5,613.1 186.8,616.6 187.0,614.6 187.3,615.5 187.5,603.0 187.7,622.7 188.0,616.2 188.2,613.7 188.4,624.7 188.7,615.2 188.9,623.2 189.1,613.3 189.4,613.2 189.6,580.7 189.8,617.6 190.1,616.9 190.3,620.6 190.5,616.2 190.8,623.7 191.0,605.3 191.3,616.3 191.5,613.8 191.7,610.6 192.0,613.5 192.2,613.7 192.4,614.5 192.7,614.2 192.9,603.9 193.1,612.0 193.4,612.1 193.6,624.0 193.8,612.8 194.1,615.2 194.3,610.2 194.5,610.9 194.8,610.8 195.0,613.1 195.3,605.3 195.5,616.5 195.7,623.4 196.0,614.8 196.2,616.4 196.4,617.9 196.7,626.2 196.9,614.5 197.1,625.7 197.4,615.2 197.6,625.3 197.8,614.8 198.1,616.8 198.3,616.8 198.5,614.6 198.8,603.7 199.0,614.6 199.3,612.2 199.5,610.7 199.7,613.8 200.0,623.3 200.2,618.1 200.4,614.7 200.7,612.2 200.9,615.5 201.1,618.0 201.4,622.0 201.6,594.3 201.8,611.5 202.1,596.4 202.3,615.7 202.5,613.8 202.8,598.7 203.0,622.1 203.3,609.3 203.5,619.4 203.7,616.5 204.0,614.8 204.2,620.1 204.4,617.8 204.7,617.7 204.9,616.4 205.1,616.8 205.4,615.1 205.6,609.9 205.8,613.8 206.1,622.2 206.3,614.7 206.5,614.7 206.8,614.6 207.0,612.1 207.3,623.8 207.5,611.7 207.7,609.9 208.0,607.9 208.2,608.8 208.4,620.6 208.7,608.9 208.9,605.5 209.1,605.4 209.4,606.6 209.6,610.8 209.8,623.9 210.1,609.2 210.3,604.0 210.5,600.3 210.8,613.3 211.0,597.2 211.3,535.0 211.5,614.1 211.7,616.3 212.0,611.5 212.2,614.1 212.4,614.3 212.7,615.1 212.9,614.8 213.1,616.3 213.4,615.5 213.6,512.2 213.8,623.8 214.1,610.5 214.3,619.7 214.5,619.7 214.8,608.1 215.0,603.4 215.3,608.4 215.5,595.7 215.7,607.3 216.0,621.7 216.2,612.0 216.4,621.8 216.7,610.7 216.9,613.5 217.1,619.8 217.4,608.0 217.6,611.4 217.8,609.3 218.1,621.1 218.3,623.3 218.5,611.0 218.8,599.5 219.0,611.0 219.3,609.1 219.5,611.4 219.7,596.5 220.0,621.6 220.2,605.8 220.4,607.3 220.7,624.6 220.9,610.5 221.1,609.7 221.4,607.3 221.6,610.7 221.8,614.0 222.1,610.9 222.3,613.9 222.5,625.0 222.8,614.3 223.0,615.1 223.3,613.6 223.5,609.9 223.7,614.2 224.0,615.0 224.2,613.4 224.4,615.4 224.7,615.7 224.9,615.1 225.1,612.4 225.4,614.4 225.6,608.8 225.8,611.8 226.1,620.6 226.3,611.0 226.5,610.1 226.8,609.6 227.0,611.4 227.2,616.5 227.5,616.6 227.7,610.2 228.0,612.8 228.2,616.2 228.4,611.0 228.7,611.3 228.9,616.2 229.1,611.9 229.4,613.7 229.6,596.0 229.8,591.9 230.1,605.4 230.3,609.4 230.5,610.8 230.8,605.3 231.0,617.2 231.2,610.1 231.5,548.0 231.7,622.2 232.0,597.6 232.2,597.9 232.4,533.0 232.7,616.0 232.9,615.1 233.1,615.0 233.4,614.7 233.6,605.2 233.8,613.8 234.1,614.4 234.3,611.5 234.5,616.6 234.8,574.4 235.0,613.8 235.2,625.5 235.5,599.1 235.7,617.8 236.0,615.9 236.2,615.4 236.4,614.5 236.7,602.3 236.9,599.4 237.1,615.2 237.4,618.6 237.6,623.1 237.8,614.5 238.1,621.8 238.3,620.4 238.5,623.8 238.8,568.0 239.0,615.4 239.2,614.4 239.5,599.0 239.7,617.8 240.0,616.7 240.2,622.0 240.4,617.2 240.7,607.4 240.9,616.6 241.1,624.2 241.4,621.0 241.6,615.4 241.8,614.6 242.1,611.0 242.3,614.9 242.5,545.7 242.8,616.5 243.0,615.3 243.2,620.0 243.5,613.1 243.7,622.6 244.0,613.5 244.2,613.0 244.4,613.2 244.7,611.8 244.9,614.1 245.1,610.2 245.4,621.0 245.6,609.5 245.8,611.3 246.1,605.3 246.3,612.2 246.5,626.4 246.8,620.1 247.0,610.1 247.2,606.0 247.5,619.4 247.7,609.7 248.0,598.6 248.2,610.9 248.4,622.3 248.7,613.6 248.9,614.3 249.1,608.0 249.4,615.7 249.6,609.3 249.8,611.0 250.1,615.3 250.3,614.6 250.5,615.6 250.8,618.3 251.0,614.2 251.2,616.0 251.5,611.4 251.7,615.1 252.0,604.5 252.2,583.6 252.4,617.7 252.7,609.0 252.9,605.7 253.1,615.1 253.4,614.8 253.6,616.9 253.8,604.4 254.1,622.5 254.3,624.3 254.5,604.0 254.8,603.9 255.0,614.9 255.2,611.5 255.5,611.6 255.7,610.4 256.0,611.1 256.2,624.9 256.4,575.4 256.7,614.7 256.9,622.4 257.1,611.5 257.4,613.6 257.6,608.7 257.8,623.4 258.1,621.8 258.3,617.5 258.5,612.4 258.8,619.4 259.0,613.3 259.2,607.0 259.5,594.7 259.7,614.7 260.0,613.7 260.2,566.2 260.4,604.9 260.7,613.2 260.9,616.9 261.1,613.7 261.4,615.3 261.6,613.8 261.8,615.2 262.1,612.0 262.3,615.0 262.5,625.4 262.8,591.4 263.0,610.1 263.2,608.3 263.5,614.2 263.7,622.6 264.0,596.0 264.2,613.4 264.4,619.7 264.7,605.9 264.9,615.8 265.1,614.1 265.4,616.9 265.6,616.1 265.8,624.9 266.1,620.6 266.3,617.1 266.5,621.1 266.8,615.4 267.0,614.6 267.2,621.7 267.5,607.5 267.7,620.8 268.0,577.3 268.2,594.6 268.4,617.1 268.7,615.8 268.9,615.6 269.1,625.7 269.4,613.0 269.6,612.4 269.8,612.7 270.1,611.9 270.3,601.2 270.5,612.0 270.8,613.1 271.0,609.1 271.2,611.3 271.5,609.8 271.7,621.2 272.0,613.9 272.2,552.3 272.4,613.7 272.7,611.6 272.9,606.1 273.1,614.2 273.4,603.3 273.6,612.6 273.8,612.5 274.1,607.4 274.3,611.9 274.5,613.9 274.8,598.7 275.0,616.6 275.2,613.6 275.5,614.1 275.7,612.9 276.0,613.8 276.2,614.5 276.4,615.3 276.7,615.8 276.9,602.5 277.1,619.9 277.4,618.8 277.6,610.9 277.8,613.2 278.1,616.1 278.3,615.8 278.5,617.6 278.8,601.6 279.0,624.4 279.2,616.5 279.5,610.1 279.7,614.6 279.9,615.0 280.2,567.6 280.4,597.8 280.7,625.8 280.9,611.4 281.1,609.4 281.4,610.2 281.6,619.8 281.8,603.5 282.1,625.5 282.3,614.6 282.5,613.2 282.8,610.7 283.0,603.0 283.2,607.9 283.5,620.4 283.7,600.5 283.9,622.2 284.2,625.7 284.4,605.9 284.7,623.0 284.9,607.7 285.1,598.6 285.4,611.9 285.6,596.4 285.8,612.9 286.1,602.8 286.3,597.3 286.5,614.5 286.8,615.4 287.0,617.4 287.2,614.3 287.5,616.2 287.7,613.8 287.9,614.7 288.2,611.8 288.4,614.4 288.7,613.7 288.9,615.7 289.1,615.0 289.4,616.3 289.6,552.3 289.8,612.6 290.1,617.1 290.3,616.7 290.5,617.4 290.8,621.0 291.0,591.6 291.2,615.6 291.5,617.6 291.7,620.1 291.9,612.5 292.2,521.8 292.4,621.4 292.7,614.8 292.9,617.0 293.1,550.0 293.4,614.2 293.6,608.6 293.8,575.4 294.1,612.1 294.3,616.8 294.5,615.1 294.8,614.6 295.0,625.6 295.2,614.4 295.5,614.7 295.7,620.8 295.9,594.7 296.2,625.4 296.4,615.0 296.7,615.8 296.9,615.3 297.1,610.5 297.4,625.6 297.6,619.8 297.8,624.2 298.1,616.3 298.3,612.4 298.5,622.2 298.8,613.7 299.0,625.7 299.2,619.7 299.5,614.8 299.7,612.5 299.9,615.4 300.2,611.2 300.4,623.4 300.7,612.9 300.9,613.9 301.1,614.0 301.4,611.8 301.6,608.3 301.8,622.6 302.1,610.4 302.3,613.8 302.5,611.3 302.8,612.2 303.0,616.1 303.2,607.0 303.5,616.4 303.7,617.7 303.9,614.4 304.2,614.8 304.4,615.7 304.7,615.0 304.9,612.8 305.1,622.6 305.4,571.6 305.6,619.2 305.8,612.5 306.1,607.8 306.3,621.2 306.5,611.0 306.8,610.6 307.0,610.2 307.2,625.1 307.5,613.3 307.7,623.8 307.9,610.0 308.2,611.5 308.4,598.3 308.7,610.1 308.9,610.7 309.1,610.7 309.4,611.4 309.6,620.4 309.8,612.3 310.1,611.5 310.3,606.2 310.5,608.6 310.8,611.3 311.0,611.2 311.2,609.0 311.5,613.5 311.7,610.5 311.9,610.7 312.2,607.2 312.4,606.4 312.7,611.6 312.9,611.9 313.1,611.6 313.4,610.0 313.6,613.1 313.8,609.3 314.1,611.3 314.3,610.7 314.5,609.9 314.8,608.6 315.0,601.7 315.2,613.9 315.5,611.5 315.7,568.2 315.9,622.2 316.2,610.5 316.4,606.8 316.7,608.1 316.9,606.0 317.1,609.2 317.4,595.1 317.6,610.1 317.8,610.1 318.1,609.2 318.3,610.0 318.5,618.8 318.8,612.1 319.0,611.8 319.2,607.7 319.5,609.6 319.7,608.7 319.9,611.0 320.2,611.6 320.4,604.6 320.7,563.2 320.9,604.0 321.1,609.4 321.4,607.7 321.6,596.1 321.8,604.5 322.1,609.8 322.3,526.8 322.5,599.0 322.8,612.5 323.0,611.7 323.2,616.8 323.5,619.3 323.7,612.2 323.9,596.7 324.2,609.6 324.4,611.5 324.7,606.1 324.9,610.4 325.1,610.5 325.4,555.0 325.6,598.4 325.8,602.7 326.1,605.3 326.3,617.5 326.5,602.9 326.8,602.4 327.0,600.4 327.2,601.8 327.5,614.1 327.7,602.0 327.9,603.2 328.2,602.5 328.4,598.7 328.7,598.1 328.9,598.5 329.1,602.2 329.4,597.7 329.6,593.4 329.8,601.2 330.1,601.5 330.3,600.6 330.5,569.0 330.8,602.8 331.0,597.0 331.2,618.8 331.5,601.5 331.7,592.1 331.9,602.0 332.2,602.7 332.4,604.0 332.6,593.5 332.9,594.0 333.1,597.3 333.4,596.8 333.6,612.4 333.8,597.8 334.1,598.7 334.3,590.8 334.5,591.6 334.8,594.9 335.0,597.4 335.2,596.4 335.5,597.8 335.7,604.8 335.9,598.1 336.2,598.3 336.4,524.8 336.6,611.8 336.9,605.3 337.1,597.1 337.4,583.7 337.6,607.0 337.8,599.0 338.1,597.6 338.3,591.5 338.5,593.6 338.8,597.7 339.0,598.6 339.2,582.5 339.5,594.1 339.7,598.6 339.9,593.2 340.2,598.2 340.4,595.1 340.6,593.4 340.9,597.1 341.1,592.3 341.4,594.7 341.6,590.0 341.8,591.5 342.1,597.7 342.3,599.9 342.5,600.7 342.8,569.3 343.0,598.1 343.2,602.8 343.5,601.5 343.7,601.4 343.9,608.7 344.2,600.4 344.4,602.4 344.6,601.3 344.9,623.0 345.1,598.9 345.4,569.2 345.6,598.8 345.8,599.8 346.1,596.7 346.3,600.3 346.5,608.8 346.8,569.7 347.0,596.1 347.2,598.6 347.5,599.6 347.7,600.3 347.9,589.3 348.2,597.6 348.4,604.1 348.6,594.9 348.9,607.7 349.1,599.5 349.4,580.2 349.6,595.2 349.8,601.5 350.1,602.1 350.3,599.0 350.5,584.7 350.8,601.1 351.0,600.3 351.2,598.0 351.5,588.9 351.7,597.1 351.9,610.8 352.2,616.5 352.4,566.1 352.6,596.7 352.9,594.0 353.1,563.6 353.4,598.1 353.6,594.0 353.8,597.1 354.1,579.8 354.3,531.1 354.5,590.4 354.8,605.7 355.0,604.8 355.2,596.7 355.5,596.3 355.7,609.3 355.9,592.3 356.2,579.8 356.4,596.7 356.6,611.7 356.9,584.3 357.1,581.9 357.4,601.6 357.6,597.8 357.8,600.7 358.1,608.2 358.3,602.6 358.5,568.9 358.8,602.3 359.0,599.3 359.2,599.2 359.5,589.8 359.7,599.5 359.9,603.1 360.2,609.6 360.4,586.0 360.6,599.9 360.9,602.8 361.1,600.6 361.4,602.0 361.6,599.2 361.8,610.0 362.1,583.3 362.3,567.1 362.5,604.6 362.8,598.4 363.0,602.1 363.2,601.5 363.5,599.1 363.7,609.0 363.9,601.6 364.2,584.1 364.4,563.7 364.6,600.7 364.9,612.6 365.1,601.1 365.4,606.2 365.6,603.3 365.8,608.4 366.1,601.7 366.3,605.5 366.5,603.4 366.8,603.6 367.0,557.0 367.2,588.2 367.5,604.9 367.7,601.9 367.9,585.6 368.2,623.9 368.4,603.3 368.6,605.4 368.9,613.4 369.1,602.7 369.4,605.2 369.6,606.4 369.8,581.0 370.1,607.2 370.3,606.4 370.5,603.5 370.8,605.5 371.0,601.9 371.2,603.7 371.5,588.9 371.7,605.7 371.9,611.5 372.2,602.9 372.4,599.4 372.6,582.7 372.9,604.9 373.1,583.1 373.4,603.0 373.6,624.4 373.8,615.8 374.1,612.3 374.3,605.0 374.5,615.0 374.8,614.1 375.0,603.2 375.2,605.4 375.5,604.1 375.7,615.4 375.9,607.2 376.2,598.2 376.4,608.1 376.6,562.8 376.9,604.7 377.1,597.7 377.4,599.5 377.6,616.2 377.8,609.0 378.1,608.0 378.3,610.7 378.5,611.1 378.8,605.9 379.0,601.3 379.2,594.7 379.5,612.1 379.7,617.4 379.9,611.5 380.2,614.2 380.4,609.0 380.6,564.6 380.9,609.2 381.1,594.9 381.4,611.4 381.6,606.8 381.8,607.6 382.1,587.5 382.3,605.8 382.5,608.0 382.8,593.9 383.0,608.1 383.2,609.5 383.5,615.8 383.7,605.6 383.9,556.0 384.2,581.8 384.4,606.4 384.6,614.7 384.9,610.3 385.1,619.8 385.3,608.8 385.6,609.6 385.8,616.4 386.1,603.2 386.3,608.3 386.5,598.5 386.8,608.1 387.0,617.2 387.2,606.1 387.5,607.2 387.7,611.3 387.9,565.8 388.2,616.6 388.4,610.4 388.6,610.5 388.9,617.9 389.1,601.3 389.3,611.7 389.6,595.6 389.8,605.5 390.1,609.7 390.3,605.0 390.5,604.5 390.8,604.7 391.0,610.5 391.2,607.8 391.5,610.7 391.7,608.0 391.9,618.3 392.2,606.7 392.4,616.9 392.6,607.9 392.9,611.2 393.1,611.4 393.3,605.6 393.6,621.1 393.8,601.0 394.1,608.7 394.3,604.6 394.5,613.3 394.8,604.2 395.0,617.8 395.2,606.9 395.5,607.3 395.7,606.4 395.9,621.7 396.2,607.6 396.4,609.4 396.6,606.4 396.9,612.6 397.1,563.7 397.3,599.1 397.6,608.3 397.8,611.6 398.1,622.7 398.3,610.0 398.5,600.1 398.8,619.9 399.0,610.5 399.2,606.6 399.5,610.9 399.7,610.5 399.9,592.3 400.2,619.8 400.4,597.3 400.6,613.9 400.9,604.8 401.1,617.1 401.3,607.3 401.6,608.1 401.8,613.3 402.1,613.0 402.3,618.5 402.5,612.2 402.8,599.3 403.0,611.6 403.2,619.7 403.5,613.5 403.7,620.7 403.9,620.2 404.2,612.2 404.4,596.6 404.6,613.2 404.9,616.4 405.1,612.0 405.3,603.2 405.6,613.8 405.8,611.8 406.1,621.8 406.3,610.1 406.5,612.3 406.8,614.3 407.0,614.0 407.2,614.2 407.5,607.8 407.7,612.0 407.9,607.4 408.2,606.3 408.4,612.4 408.6,609.6 408.9,609.1 409.1,611.9 409.3,609.6 409.6,607.7 409.8,609.5 410.1,623.1 410.3,599.7 410.5,605.0 410.8,612.7 411.0,613.8 411.2,613.3 411.5,602.6 411.7,621.4 411.9,610.6 412.2,613.5 412.4,613.5 412.6,611.8 412.9,613.5 413.1,591.0 413.3,614.0 413.6,608.8 413.8,610.1 414.1,608.2 414.3,614.6 414.5,612.7 414.8,611.6 415.0,611.6 415.2,613.1 415.5,547.0 415.7,621.6 415.9,620.4 416.2,613.2 416.4,612.6 416.6,600.4 416.9,609.2 417.1,532.4 417.3,604.4 417.6,602.5 417.8,605.7 418.1,597.4 418.3,609.0 418.5,621.5 418.8,607.3 419.0,611.3 419.2,623.0 419.5,622.8 419.7,610.6 419.9,609.1 420.2,594.5 420.4,596.3 420.6,606.6 420.9,609.0 421.1,612.8 421.3,612.8 421.6,606.6 421.8,607.5 422.1,614.2 422.3,606.7 422.5,618.3 422.8,605.5 423.0,598.5 423.2,618.0 423.5,589.8 423.7,609.0 423.9,608.3 424.2,604.4 424.4,614.0 424.6,610.8 424.9,595.7 425.1,608.8 425.3,621.9 425.6,610.0 425.8,609.1 426.1,618.6 426.3,618.5 426.5,611.7 426.8,610.8 427.0,622.9 427.2,606.1 427.5,546.0 427.7,614.4 427.9,610.3 428.2,517.2 428.4,611.4 428.6,608.8 428.9,598.9 429.1,612.4 429.3,611.9 429.6,621.2 429.8,604.3 430.1,593.0 430.3,610.9 430.5,612.0 430.8,607.0 431.0,604.4 431.2,609.1 431.5,533.0 431.7,613.7 431.9,608.2 432.2,609.9 432.4,553.0 432.6,610.0 432.9,608.8 433.1,612.1 433.3,619.7 433.6,622.6 433.8,611.8 434.1,609.9 434.3,612.0 434.5,612.3 434.8,615.9 435.0,596.9 435.2,609.4 435.5,592.4 435.7,620.0 435.9,606.8 436.2,606.7 436.4,616.1 436.6,608.6 436.9,619.4 437.1,603.4 437.3,602.3 437.6,612.8 437.8,615.8 438.0,621.7 438.3,618.4 438.5,610.9 438.8,588.1 439.0,607.0 439.2,610.0 439.5,609.8 439.7,610.7 439.9,606.5 440.2,595.9 440.4,609.7 440.6,608.2 440.9,609.5 441.1,611.3 441.3,569.3 441.6,613.3 441.8,603.7 442.0,563.2 442.3,607.2 442.5,609.1 442.8,610.0 443.0,617.5 443.2,610.5 443.5,604.2 443.7,585.2 443.9,607.5 444.2,583.1 444.4,604.9 444.6,600.5 444.9,619.8 445.1,601.4 445.3,596.3 445.6,605.0 445.8,592.0 446.0,610.3 446.3,608.5 446.5,607.3 446.8,610.5 447.0,606.8 447.2,593.3 447.5,555.0 447.7,609.5 447.9,609.5 448.2,591.4 448.4,591.8 448.6,565.4 448.9,606.1 449.1,605.0 449.3,607.4 449.6,616.8 449.8,591.3 450.0,602.6 450.3,606.0 450.5,605.1 450.8,605.3 451.0,606.7 451.2,594.1 451.5,616.3 451.7,608.0 451.9,607.5 452.2,602.4 452.4,605.2 452.6,604.9 452.9,601.9 453.1,604.3 453.3,604.6 453.6,593.7 453.8,615.2 454.0,588.4 454.3,604.1 454.5,603.0 454.8,607.8 455.0,603.1 455.2,590.9 455.5,623.0 455.7,591.3 455.9,597.4 456.2,591.2 456.4,607.7 456.6,607.2 456.9,604.6 457.1,605.8 457.3,602.6 457.6,603.2 457.8,600.5 458.0,604.4 458.3,545.7 458.5,606.6 458.8,604.5 459.0,603.4 459.2,586.3 459.5,562.6 459.7,602.9 459.9,599.8 460.2,606.1 460.4,602.6 460.6,601.2 460.9,605.3 461.1,609.5 461.3,551.0 461.6,603.2 461.8,604.1 462.0,599.9 462.3,608.5 462.5,605.4 462.8,614.2 463.0,603.1 463.2,582.9 463.5,601.2 463.7,601.7 463.9,598.1 464.2,612.6 464.4,608.5 464.6,604.4 464.9,600.5 465.1,602.4 465.3,569.8 465.6,414.0 465.8,605.1 466.0,606.4 466.3,517.0 466.5,605.1 466.8,605.7 467.0,604.1 467.2,599.4 467.5,603.3 467.7,595.9 467.9,614.2 468.2,588.4 468.4,600.1 468.6,603.6 468.9,562.4 469.1,605.5 469.3,602.7 469.6,584.0 469.8,604.6 470.0,602.3 470.3,603.7 470.5,604.5 470.8,597.8 471.0,605.4 471.2,545.0 471.5,603.0 471.7,605.7 471.9,599.7 472.2,600.4 472.4,601.4 472.6,605.4 472.9,602.8 473.1,606.0 473.3,599.2 473.6,610.0 473.8,602.5 474.0,603.0 474.3,599.6 474.5,587.2 474.8,606.2 475.0,607.2 475.2,599.1 475.5,591.4 475.7,595.6 475.9,624.3 476.2,550.0 476.4,602.6 476.6,612.7 476.9,601.2 477.1,612.4 477.3,602.8 477.6,604.0 477.8,616.7 478.0,604.8 478.3,603.7 478.5,605.7 478.8,613.6 479.0,608.3 479.2,607.3 479.5,607.5 479.7,606.7 479.9,615.5 480.2,602.7 480.4,606.8 480.6,606.6 480.9,607.3 481.1,604.5 481.3,603.8 481.6,608.8 481.8,608.0 482.0,610.0 482.3,594.2 482.5,616.4 482.8,604.6 483.0,606.6 483.2,608.3 483.5,608.7 483.7,606.4 483.9,604.1 484.2,608.6 484.4,579.7 484.6,608.4 484.9,597.9 485.1,608.3 485.3,602.6 485.6,372.3 485.8,565.8 486.0,608.6 486.3,605.9 486.5,489.3 486.8,597.4 487.0,608.5 487.2,609.4 487.5,610.9 487.7,610.5 487.9,608.8 488.2,606.5 488.4,564.9 488.6,568.7 488.9,606.8 489.1,601.4 489.3,621.3 489.6,609.4 489.8,579.4 490.0,594.5 490.3,593.9 490.5,616.7 490.7,564.4 491.0,607.3 491.2,524.1 491.5,607.0 491.7,606.6 491.9,601.0 492.2,610.3 492.4,609.8 492.6,609.0 492.9,571.1 493.1,611.4 493.3,609.1 493.6,608.3 493.8,612.8 494.0,609.7 494.3,612.4 494.5,613.3 494.7,593.8 495.0,622.7 495.2,624.8 495.5,614.7 495.7,607.5 495.9,611.9 496.2,614.3 496.4,447.2 496.6,609.7 496.9,617.8 497.1,613.1 497.3,533.0 497.6,615.4 497.8,615.3 498.0,609.1 498.3,598.2 498.5,616.9 498.7,599.8 499.0,604.1 499.2,611.5 499.5,611.6 499.7,612.8 499.9,614.7 500.2,612.0 500.4,626.0 500.6,617.4 500.9,588.8 501.1,612.1 501.3,604.2 501.6,609.1 501.8,611.1 502.0,617.5 502.3,615.9 502.5,616.4 502.7,612.9 503.0,612.9 503.2,622.2 503.5,555.0 503.7,610.6 503.9,612.1 504.2,614.1 504.4,615.5 504.6,610.6 504.9,613.9 505.1,599.9 505.3,588.5 505.6,623.9 505.8,611.2 506.0,598.0 506.3,622.5 506.5,613.4 506.7,619.2 507.0,614.8 507.2,603.6 507.5,622.0 507.7,624.4 507.9,625.5 508.2,614.8 508.4,535.0 508.6,612.9 508.9,613.5 509.1,620.2 509.3,598.2 509.6,612.4 509.8,616.8 510.0,611.8 510.3,619.8 510.5,614.6 510.7,613.0 511.0,612.1 511.2,615.3 511.5,618.3 511.7,616.6 511.9,617.7 512.2,616.6 512.4,615.3 512.6,616.8 512.9,618.6 513.1,614.2 513.3,614.0 513.6,621.3 513.8,610.8 514.0,606.5 514.3,612.0 514.5,608.4 514.7,617.8 515.0,615.3 515.2,618.0 515.5,616.7 515.7,618.0 515.9,616.3 516.2,617.6 516.4,613.9 516.6,613.8 516.9,612.1 517.1,609.1 517.3,621.8 517.6,626.4 517.8,613.0 518.0,579.9 518.3,614.8 518.5,622.7 518.7,618.9 519.0,615.4 519.2,622.4 519.5,618.3 519.7,599.3 519.9,617.1 520.2,614.8 520.4,609.3 520.6,617.1 520.9,618.1 521.1,599.4 521.3,622.5 521.6,599.8 521.8,601.4 522.0,603.3 522.3,610.6 522.5,614.2 522.7,610.1 523.0,612.8 523.2,552.3 523.5,611.4 523.7,622.1 523.9,621.6 524.2,612.0 524.4,612.7 524.6,610.9 524.9,623.3 525.1,615.2 525.3,604.6 525.6,616.0 525.8,607.4 526.0,625.8 526.3,615.8 526.5,600.9 526.7,617.9 527.0,618.5 527.2,616.7 527.5,622.3 527.7,593.6 527.9,612.3 528.2,621.6 528.4,626.3 528.6,598.5 528.9,612.5 529.1,613.3 529.3,617.3 529.6,609.5 529.8,616.3 530.0,620.5 530.3,612.7 530.5,615.7 530.7,617.7 531.0,617.2 531.2,600.6 531.5,621.1 531.7,617.8 531.9,622.5 532.2,616.3 532.4,614.0 532.6,592.0 532.9,618.2 533.1,621.3 533.3,610.3 533.6,618.7 533.8,614.4 534.0,617.6 534.3,625.0 534.5,614.7 534.7,621.7 535.0,616.5 535.2,617.9 535.5,617.6 535.7,599.6 535.9,616.0 536.2,613.0 536.4,624.4 536.6,614.5 536.9,614.0 537.1,608.8 537.3,603.5 537.6,627.1 537.8,590.2 538.0,615.2 538.3,610.0 538.5,627.4 538.7,623.2 539.0,614.8 539.2,615.7 539.5,616.7 539.7,622.5 539.9,614.4 540.2,618.2 540.4,578.2 540.6,605.8 540.9,573.0 541.1,616.1 541.3,614.6 541.6,625.1 541.8,596.6 542.0,615.2 542.3,610.8 542.5,611.8 542.7,611.7 543.0,613.2 543.2,621.3 543.5,615.8 543.7,627.1 543.9,617.0 544.2,615.8 544.4,584.9 544.6,615.9 544.9,582.7 545.1,614.5 545.3,616.0 545.6,617.7 545.8,616.9 546.0,617.4 546.3,607.7 546.5,617.3 546.7,608.1 547.0,613.3 547.2,612.1 547.4,617.7 547.7,617.1 547.9,615.9 548.2,617.3 548.4,600.2 548.6,612.4 548.9,627.4 549.1,617.7 549.3,624.7 549.6,613.4 549.8,627.5 550.0,612.4 550.3,614.8 550.5,616.8 550.7,625.2 551.0,614.9 551.2,607.9 551.4,618.7 551.7,570.9 551.9,617.3 552.2,617.0 552.4,615.3 552.6,618.9 552.9,611.4 553.1,612.2 553.3,612.2 553.6,620.9 553.8,614.9 554.0,617.9 554.3,614.5 554.5,613.3 554.7,617.9 555.0,615.5 555.2,618.9 555.4,556.0 555.7,605.9 555.9,615.0 556.2,614.7 556.4,614.2 556.6,613.3 556.9,612.9 557.1,611.3 557.3,615.6 557.6,624.4 557.8,612.0 558.0,623.2 558.3,584.3 558.5,597.6 558.7,613.3 559.0,609.5 559.2,611.2 559.4,606.3 559.7,612.9 559.9,614.1 560.2,600.5 560.4,622.5 560.6,612.3 560.9,609.3 561.1,585.6 561.3,621.0 561.6,612.7 561.8,612.5 562.0,612.5 562.3,615.3 562.5,616.1 562.7,616.7 563.0,618.7 563.2,619.2 563.4,625.4 563.7,627.2 563.9,618.2 564.2,622.0 564.4,615.4 564.6,609.9 564.9,610.4 565.1,615.2 565.3,625.4 565.6,613.7 565.8,593.9 566.0,611.5 566.3,622.1 566.5,599.9 566.7,626.3 567.0,614.1 567.2,627.3 567.4,614.7 567.7,603.7 567.9,615.2 568.2,623.8 568.4,625.9 568.6,615.9 568.9,616.2 569.1,625.3 569.3,621.6 569.6,614.9 569.8,625.2 570.0,622.2 570.3,615.7 570.5,627.5 570.7,618.6 571.0,590.1 571.2,612.6 571.4,611.3 571.7,622.2 571.9,611.6 572.2,616.8 572.4,601.4 572.6,616.6 572.9,613.1 573.1,562.4 573.3,619.3 573.6,618.0 573.8,614.6 574.0,611.4 574.3,615.4 574.5,616.1 574.7,606.6 575.0,625.6 575.2,604.4 575.4,615.3 575.7,579.6 575.9,614.8 576.2,614.9 576.4,623.5 576.6,626.0 576.9,613.6 577.1,625.8 577.3,618.6 577.6,616.9 577.8,622.6 578.0,604.9 578.3,624.0 578.5,615.8 578.7,624.2 579.0,626.4 579.2,598.4 579.4,616.6 579.7,617.6 579.9,605.8 580.2,616.8 580.4,618.5 580.6,615.9 580.9,613.1 581.1,619.8 581.3,615.1 581.6,617.4 581.8,610.7 582.0,607.1 582.3,624.3 582.5,597.6 582.7,617.9 583.0,612.4 583.2,552.0 583.4,614.6 583.7,622.9 583.9,538.0 584.2,615.4 584.4,605.8 584.6,619.4 584.9,597.5 585.1,626.7 585.3,545.7 585.6,612.0 585.8,619.5 586.0,590.9 586.3,599.8 586.5,612.9 586.7,620.8 587.0,622.1 587.2,603.3 587.4,617.1 587.7,617.7 587.9,604.1 588.2,615.8 588.4,617.5 588.6,617.5 588.9,619.1 589.1,617.4 589.3,606.0 589.6,616.7 589.8,621.0 590.0,626.7 590.3,616.6 590.5,618.8 590.7,618.7 591.0,617.8 591.2,615.0 591.4,602.8 591.7,618.0 591.9,617.5 592.2,622.1 592.4,617.2 592.6,616.4 592.9,616.9 593.1,617.5 593.3,615.8 593.6,617.9 593.8,614.6 594.0,617.1 594.3,617.4 594.5,618.1 594.7,571.3 595.0,625.9 595.2,626.9 595.4,617.2 595.7,617.8 595.9,617.0 596.2,621.2 596.4,619.8 596.6,618.9 596.9,618.1 597.1,615.3 597.3,617.9 597.6,618.6 597.8,616.0 598.0,614.2 598.3,615.1 598.5,608.3 598.7,616.2 599.0,611.9 599.2,614.0 599.4,623.7 599.7,617.9 599.9,614.0 600.1,616.9 600.4,616.0 600.6,610.3 600.9,610.8 601.1,626.5 601.3,612.5 601.6,626.5 601.8,625.6 602.0,611.2 602.3,602.3 602.5,613.2 602.7,627.0 603.0,614.9 603.2,610.4 603.4,599.5 603.7,612.1 603.9,612.6 604.1,613.0 604.4,614.6 604.6,612.6 604.9,620.7 605.1,615.0 605.3,617.9 605.6,600.3 605.8,617.5 606.0,617.4 606.3,617.2 606.5,614.5 606.7,615.5 607.0,615.2 607.2,614.5 607.4,613.8 607.7,612.4 607.9,600.2 608.1,598.3 608.4,593.7 608.6,612.7 608.9,624.1 609.1,610.7 609.3,615.2 609.6,616.3 609.8,620.2 610.0,617.4 610.3,524.8 610.5,617.5 610.7,616.5 611.0,606.6 611.2,617.9 611.4,617.2 611.7,614.6 611.9,624.3 612.1,615.0 612.4,615.9 612.6,616.1 612.9,625.5 613.1,615.4 613.3,613.8 613.6,615.9 613.8,617.0 614.0,612.0 614.3,616.1 614.5,617.1 614.7,617.0 615.0,618.0 615.2,618.2 615.4,625.2 615.7,613.0 615.9,616.3 616.1,614.3 616.4,612.3 616.6,612.1 616.9,613.8 617.1,608.2 617.3,599.1 617.6,609.4 617.8,604.9 618.0,613.8 618.3,608.4 618.5,609.0 618.7,604.1 619.0,568.6 619.2,608.3 619.4,607.6 619.7,597.3 619.9,621.3 620.1,605.7 620.4,610.6 620.6,611.7 620.9,609.6 621.1,614.9 621.3,610.5 621.6,613.8 621.8,607.9 622.0,612.4 622.3,615.3 622.5,609.7 622.7,604.9 623.0,616.8 623.2,613.8 623.4,600.6 623.7,597.5 623.9,613.1 624.1,596.5 624.4,590.7 624.6,615.2 624.9,608.2 625.1,612.0 625.3,607.0 625.6,607.9 625.8,613.2 626.0,566.6 626.3,609.3 626.5,610.7 626.7,605.6 627.0,600.3 627.2,610.1 627.4,600.2 627.7,609.2 627.9,606.0 628.1,606.4 628.4,609.3 628.6,609.0 628.9,599.3 629.1,601.3 629.3,616.8 629.6,593.9 629.8,605.0 630.0,602.1 630.3,612.9 630.5,602.9 630.7,611.4 631.0,605.9 631.2,610.0 631.4,578.3 631.7,617.4 631.9,600.3 632.1,605.1 632.4,572.8 632.6,611.9 632.9,591.5 633.1,613.1 633.3,605.7 633.6,610.9 633.8,611.0 634.0,606.1 634.3,595.2 634.5,609.5 634.7,603.1 635.0,611.5 635.2,612.6 635.4,600.8 635.7,606.6 635.9,591.0 636.1,599.2 636.4,612.1 636.6,607.4 636.9,604.8 637.1,616.8 637.3,609.2 637.6,608.9 637.8,595.0 638.0,606.6 638.3,604.0 638.5,602.3 638.7,602.0 639.0,603.7 639.2,591.2 639.4,597.1 639.7,611.6 639.9,600.4 640.1,606.8 640.4,609.9 640.6,606.6 640.9,605.1 641.1,600.7 641.3,593.3 641.6,598.9 641.8,606.9 642.0,603.7 642.3,546.3 642.5,608.7 642.7,586.1 643.0,602.4 643.2,605.2 643.4,599.5 643.7,602.4 643.9,589.7 644.1,603.6 644.4,603.1 644.6,603.2 644.9,596.9 645.1,598.5 645.3,603.1 645.6,600.8 645.8,607.8 646.0,602.2 646.3,590.8 646.5,601.8 646.7,598.6 647.0,574.3 647.2,602.1 647.4,603.4 647.7,595.2 647.9,594.1 648.1,604.4 648.4,598.9 648.6,595.2 648.9,616.2 649.1,577.8 649.3,604.2 649.6,603.8 649.8,603.2 650.0,603.9 650.3,606.5 650.5,599.8 650.7,608.8 651.0,608.8 651.2,594.4 651.4,565.3 651.7,607.4 651.9,616.5 652.1,594.6 652.4,610.7 652.6,603.0 652.8,600.2 653.1,603.7 653.3,607.3 653.6,610.1 653.8,612.3 654.0,605.1 654.3,591.6 654.5,606.9 654.7,612.2 655.0,582.9 655.2,556.0 655.4,609.4 655.7,608.1 655.9,604.8 656.1,599.2 656.4,601.5 656.6,602.9 656.8,601.4 657.1,618.6 657.3,605.5 657.6,600.6 657.8,601.4 658.0,605.4 658.3,605.0 658.5,605.6 658.7,600.1 659.0,599.4 659.2,599.2 659.4,595.9 659.7,601.3 659.9,592.1 660.1,555.0 660.4,580.4 660.6,606.0 660.8,593.9 661.1,602.1 661.3,600.0 661.6,612.8 661.8,602.5 662.0,595.7 662.3,585.4 662.5,585.1 662.7,598.7 663.0,573.4 663.2,582.3 663.4,595.3 663.7,600.9 663.9,567.2 664.1,604.9 664.4,579.3 664.6,601.7 664.8,580.3 665.1,605.5 665.3,613.9 665.6,606.1 665.8,597.2 666.0,587.5 666.3,605.5 666.5,608.1 666.7,605.3 667.0,603.6 667.2,596.2 667.4,593.9 667.7,607.8 667.9,599.1 668.1,591.6 668.4,577.5 668.6,598.5 668.8,602.2 669.1,592.2 669.3,599.5 669.6,595.1 669.8,608.0 670.0,596.4 670.3,600.6 670.5,601.7 670.7,600.6 671.0,601.2 671.2,592.8 671.4,601.9 671.7,600.8 671.9,604.7 672.1,604.7 672.4,606.9 672.6,595.6 672.8,591.4 673.1,575.4 673.3,600.0 673.6,590.2 673.8,603.3 674.0,585.8 674.3,606.5 674.5,605.9 674.7,597.6 675.0,602.2 675.2,599.7 675.4,605.0 675.7,610.3 675.9,599.8 676.1,603.0 676.4,571.5 676.6,606.0 676.8,605.3 677.1,603.5 677.3,604.9 677.6,605.9 677.8,590.6 678.0,580.7 678.3,608.9 678.5,603.4 678.7,603.9 679.0,602.6 679.2,598.0 679.4,602.9 679.7,602.0 679.9,598.2 680.1,589.8 680.4,601.4 680.6,605.6 680.8,592.7 681.1,601.7 681.3,599.1 681.6,595.9 681.8,571.0 682.0,606.7 682.3,596.3 682.5,598.6 682.7,601.2 683.0,590.9 683.2,609.1 683.4,591.4 683.7,596.0 683.9,602.8 684.1,606.5 684.4,548.0 684.6,597.8 684.8,566.4 685.1,605.7 685.3,605.5 685.6,579.8 685.8,598.4 686.0,603.2 686.3,592.1 686.5,584.8 686.7,586.5 687.0,601.1 687.2,540.0 687.4,578.9 687.7,582.9 687.9,594.3 688.1,567.6 688.4,546.0 688.6,600.8 688.8,593.5 689.1,600.6 689.3,580.4 689.6,597.6 689.8,582.2 690.0,594.8 690.3,600.4 690.5,590.0 690.7,600.7 691.0,604.6 691.2,587.1 691.4,588.8 691.7,587.6 691.9,602.0 692.1,607.7 692.4,579.0 692.6,605.8 692.8,604.6 693.1,605.6 693.3,594.6 693.6,590.6 693.8,602.9 694.0,586.2 694.3,572.3 694.5,551.6 694.7,604.8 695.0,599.9 695.2,599.7 695.4,592.1 695.7,600.7 695.9,597.2 696.1,601.6 696.4,601.5 696.6,604.0 696.8,601.4 697.1,604.4 697.3,601.8 697.6,593.3 697.8,595.7 698.0,570.5 698.3,593.0 698.5,578.3 698.7,600.6 699.0,606.4 699.2,598.2 699.4,594.0 699.7,588.7 699.9,570.3 700.1,594.9 700.4,563.3 700.6,567.1 700.8,598.7 701.1,603.2 701.3,576.5 701.6,575.6 701.8,585.9 702.0,599.2 702.3,600.0 702.5,591.4 702.7,598.8 703.0,596.0 703.2,607.0 703.4,599.4 703.7,602.0 703.9,599.0 704.1,612.6 704.4,588.0 704.6,590.5 704.8,603.4 705.1,596.2 705.3,600.2 705.5,594.7 705.8,599.1 706.0,598.1 706.3,604.6 706.5,603.4 706.7,600.5 707.0,601.4 707.2,599.4 707.4,602.4 707.7,594.5 707.9,586.5 708.1,601.4 708.4,578.7 708.6,583.2 708.8,596.2 709.1,596.6 709.3,573.4 709.5,586.0 709.8,596.9 710.0,591.9 710.3,590.7 710.5,591.8 710.7,573.9 711.0,591.3 711.2,604.4 711.4,608.2 711.7,614.1 711.9,601.2 712.1,602.0 712.4,603.4 712.6,583.2 712.8,592.4 713.1,594.5 713.3,595.7 713.5,594.6 713.8,586.1 714.0,598.5 714.3,597.0 714.5,585.6 714.7,589.1 715.0,590.7 715.2,537.0 715.4,588.0 715.7,598.4 715.9,599.7 716.1,597.6 716.4,600.0 716.6,599.6 716.8,610.5 717.1,592.9 717.3,602.2 717.5,591.8 717.8,582.3 718.0,582.2 718.3,595.9 718.5,599.4 718.7,596.1 719.0,592.6 719.2,532.0 719.4,586.5 719.7,596.8 719.9,595.4 720.1,593.6 720.4,592.5 720.6,566.6 720.8,594.2 721.1,600.3 721.3,599.2 721.5,599.6 721.8,602.0 722.0,597.5 722.3,549.0 722.5,579.3 722.7,602.1 723.0,596.6 723.2,598.0 723.4,551.0 723.7,603.4 723.9,586.3 724.1,590.6 724.4,602.7 724.6,595.8 724.8,601.3 725.1,610.0 725.3,581.6 725.5,563.2 725.8,583.8 726.0,563.3 726.3,601.6 726.5,597.6 726.7,598.3 727.0,602.1 727.2,606.7 727.4,600.4 727.7,597.8 727.9,600.7 728.1,587.8 728.4,604.2 728.6,599.9 728.8,602.8 729.1,593.0 729.3,601.6 729.5,601.6 729.8,576.6 730.0,598.3 730.3,601.5 730.5,593.5 730.7,611.2 731.0,607.2 731.2,562.6 731.4,592.4 731.7,577.0 731.9,595.1 732.1,602.1 732.4,601.0 732.6,600.3 732.8,592.8 733.1,582.8 733.3,599.2 733.5,585.4 733.8,600.4 734.0,599.9 734.3,594.5 734.5,594.5 734.7,586.3 735.0,600.8 735.2,590.6 735.4,599.6 735.7,594.8 735.9,593.3 736.1,584.6 736.4,596.6 736.6,600.6 736.8,600.7 737.1,602.6 737.3,597.3 737.5,589.1 737.8,600.1 738.0,583.3 738.3,592.5 738.5,601.3 738.7,579.7 739.0,602.9 739.2,599.8 739.4,603.6 739.7,585.8 739.9,570.8 740.1,591.2 740.4,603.3 740.6,598.5 740.8,605.6 741.1,609.8 741.3,609.4 741.5,592.0 741.8,601.9 742.0,598.1 742.3,607.3 742.5,604.2 742.7,579.2 743.0,600.8 743.2,586.6 743.4,574.3 743.7,609.4 743.9,599.0 744.1,597.2 744.4,601.1 744.6,595.2 744.8,596.4 745.1,600.1 745.3,580.6 745.5,606.4 745.8,596.4 746.0,596.6 746.3,593.0 746.5,583.2 746.7,587.0 747.0,564.1 747.2,595.5 747.4,596.4 747.7,594.2 747.9,583.6 748.1,600.5 748.4,609.8 748.6,600.5 748.8,589.2 749.1,591.4 749.3,600.1 749.5,595.0 749.8,595.1 750.0,592.5 750.3,596.4 750.5,597.3 750.7,580.7 751.0,598.4 751.2,598.5 751.4,595.1 751.7,589.5 751.9,595.1 752.1,586.8 752.4,599.4 752.6,597.0 752.8,600.0 753.1,597.9 753.3,603.0 753.5,575.5 753.8,602.2 754.0,593.9 754.3,595.4 754.5,540.0 754.7,603.7 755.0,587.0 755.2,605.1 755.4,599.1 755.7,586.7 755.9,599.4 756.1,584.8 756.4,586.1 756.6,600.3 756.8,588.4 757.1,602.6 757.3,581.2 757.5,601.5 757.8,584.6 758.0,600.6 758.2,596.4 758.5,606.7 758.7,602.9 759.0,599.7 759.2,599.2 759.4,596.7 759.7,604.0 759.9,600.2 760.1,594.9 760.4,599.6 760.6,592.2 760.8,604.0 761.1,596.0 761.3,601.1 761.5,598.9 761.8,597.5 762.0,597.8 762.2,598.0 762.5,604.4 762.7,599.6 763.0,598.8 763.2,555.0 763.4,591.4 763.7,594.8 763.9,598.9 764.1,600.8 764.4,599.4 764.6,607.2 764.8,601.7 765.1,601.2 765.3,600.2 765.5,587.1 765.8,599.8 766.0,600.8 766.2,591.0 766.5,601.1 766.7,593.8 767.0,604.5 767.2,600.1 767.4,602.4 767.7,597.6 767.9,599.2 768.1,592.9 768.4,593.5 768.6,590.8 768.8,578.6 769.1,600.6 769.3,600.6 769.5,598.4 769.8,600.1 770.0,593.4 770.2,591.9 770.5,600.7 770.7,597.6 771.0,607.1 771.2,604.3 771.4,601.8 771.7,602.2 771.9,601.2 772.1,591.4 772.4,602.0 772.6,599.9 772.8,586.8 773.1,597.6 773.3,596.5 773.5,601.4 773.8,586.3 774.0,579.4 774.2,593.7 774.5,589.2 774.7,586.5 775.0,607.1 775.2,580.3 775.4,600.5 775.7,588.6 775.9,603.0 776.1,603.3 776.4,593.1 776.6,603.0 776.8,609.0 777.1,610.7 777.3,604.1 777.5,603.4 777.8,601.7 778.0,597.9 778.2,602.6 778.5,601.7 778.7,592.1 779.0,596.6 779.2,600.3 779.4,601.9 779.7,605.7 779.9,592.7 780.1,571.2 780.4,569.4 780.6,594.2 780.8,602.9 781.1,597.7 781.3,547.3 781.5,600.9 781.8,603.5 782.0,593.0 782.2,580.4 782.5,591.1 782.7,595.0 783.0,579.3 783.2,604.3 783.4,584.7 783.7,606.7 783.9,599.0 784.1,601.9 784.4,599.0 784.6,606.6 784.8,587.5 785.1,593.8 785.3,603.0 785.5,594.3 785.8,598.3 786.0,595.1 786.2,596.8 786.5,601.5 786.7,600.0 787.0,596.2 787.2,605.9 787.4,601.3 787.7,597.5 787.9,602.8 788.1,586.1 788.4,601.4 788.6,599.7 788.8,604.0 789.1,594.0 789.3,602.8 789.5,601.7 789.8,605.5 790.0,597.0 790.2,601.2 790.5,605.4 790.7,579.7 791.0,605.9 791.2,596.1 791.4,600.4 791.7,599.8 791.9,595.2 792.1,599.5 792.4,564.9 792.6,581.2 792.8,602.5 793.1,598.2 793.3,598.6 793.5,588.9 793.8,599.9 794.0,605.6 794.2,602.3 794.5,613.9 794.7,603.6 795.0,607.4 795.2,604.5 795.4,537.0 795.7,604.5 795.9,615.0 796.1,605.9 796.4,605.6 796.6,616.1 796.8,604.1 797.1,575.1 797.3,616.2 797.5,607.6 797.8,599.5 798.0,599.6 798.2,573.6 798.5,608.9 798.7,598.4 799.0,609.5 799.2,599.4 799.4,604.2 799.7,608.4 799.9,606.9 800.1,598.0 800.4,607.3 800.6,606.1 800.8,609.8 801.1,604.5 801.3,608.0 801.5,595.3 801.8,600.5 802.0,591.2 802.2,602.9 802.5,603.1 802.7,607.8 803.0,606.1 803.2,594.3 803.4,596.8 803.7,606.1 803.9,609.7 804.1,606.2 804.4,611.7 804.6,598.4 804.8,607.3 805.1,609.6 805.3,608.7 805.5,602.8 805.8,603.9 806.0,590.0 806.2,600.5 806.5,607.4 806.7,599.2 807.0,606.9 807.2,605.5 807.4,606.5 807.7,607.3 807.9,598.1 808.1,609.3 808.4,607.3 808.6,593.0 808.8,607.7 809.1,607.0 809.3,594.3 809.5,605.7 809.8,597.0 810.0,606.8 810.2,607.1 810.5,606.5 810.7,606.1 810.9,574.3 811.2,566.2 811.4,607.4 811.7,605.4 811.9,607.2 812.1,603.9 812.4,602.4 812.6,598.6 812.8,591.5 813.1,605.0 813.3,605.1 813.5,588.6 813.8,594.6 814.0,595.3 814.2,590.8 814.5,585.9 814.7,602.8 814.9,593.4 815.2,604.8 815.4,604.2 815.7,590.2 815.9,612.2 816.1,606.8 816.4,608.8 816.6,592.4 816.8,598.9 817.1,604.7 817.3,599.3 817.5,603.6 817.8,586.0 818.0,600.2 818.2,614.2 818.5,603.6 818.7,605.4 818.9,602.8 819.2,601.7 819.4,610.5 819.7,593.1 819.9,602.7 820.1,592.9 820.4,597.9 820.6,608.3 820.8,605.8 821.1,601.8 821.3,599.1 821.5,614.1 821.8,570.5 822.0,597.3 822.2,599.2 822.5,605.4 822.7,603.3 822.9,605.9 823.2,597.9 823.4,604.0 823.7,598.7 823.9,592.2 824.1,588.7 824.4,605.9 824.6,576.4 824.8,572.2 825.1,581.4 825.3,599.7 825.5,590.7 825.8,602.2 826.0,592.8 826.2,600.9 826.5,598.4 826.7,607.5 826.9,606.5 827.2,607.1 827.4,608.7 827.7,605.1 827.9,594.5 828.1,604.8 828.4,598.5 828.6,604.2 828.8,608.2 829.1,599.1 829.3,593.7 829.5,601.2 829.8,608.4 830.0,605.7 830.2,595.0 830.5,607.3 830.7,609.2 830.9,604.1 831.2,596.5 831.4,608.6 831.7,607.5 831.9,595.3 832.1,600.4 832.4,599.3 832.6,602.1 832.8,597.6 833.1,600.0 833.3,604.9 833.5,600.7 833.8,601.8 834.0,587.9 834.2,602.8 834.5,567.7 834.7,594.3 834.9,604.2 835.2,588.9 835.4,608.6 835.7,604.1 835.9,601.7 836.1,602.0 836.4,604.0 836.6,572.3 836.8,604.3 837.1,604.6 837.3,595.7 837.5,613.2 837.8,606.8 838.0,604.3 838.2,588.1 838.5,601.9 838.7,598.1 838.9,612.7 839.2,602.3 839.4,599.1 839.7,596.1 839.9,589.9 840.1,562.5 840.4,598.7 840.6,595.3 840.8,590.3 841.1,597.2 841.3,602.4 841.5,602.1 841.8,589.0 842.0,578.5 842.2,601.3 842.5,604.7 842.7,603.8 842.9,602.8 843.2,601.7 843.4,604.8 843.7,601.5 843.9,605.1 844.1,555.0 844.4,601.5 844.6,599.4 844.8,573.1 845.1,574.3 845.3,607.1 845.5,605.9 845.8,606.1 846.0,594.7 846.2,603.8 846.5,609.4 846.7,609.9 846.9,588.9 847.2,582.1 847.4,609.4 847.7,597.6 847.9,600.6 848.1,553.0 848.4,604.3 848.6,596.4 848.8,604.0 849.1,601.5 849.3,586.5 849.5,594.2 849.8,604.3 850.0,595.8 850.2,608.9 850.5,611.5 850.7,613.1 850.9,607.0 851.2,610.5 851.4,608.3 851.7,611.3 851.9,611.1 852.1,598.9 852.4,603.6 852.6,616.1 852.8,611.8 853.1,618.9 853.3,602.8 853.5,611.5 853.8,604.4 854.0,608.5 854.2,619.8 854.5,593.3 854.7,598.1 854.9,603.6 855.2,606.6 855.4,602.6 855.7,605.2 855.9,607.3 856.1,601.5 856.4,597.5 856.6,605.7 856.8,604.4 857.1,576.8 857.3,601.5 857.5,587.8 857.8,605.4 858.0,596.0 858.2,604.6 858.5,606.1 858.7,602.9 858.9,602.0 859.2,604.1 859.4,606.6 859.7,605.0 859.9,606.7 860.1,606.5 860.4,608.5 860.6,605.5 860.8,598.4 861.1,610.0 861.3,604.8 861.5,615.7 861.8,594.6 862.0,609.9 862.2,608.2 862.5,608.2 862.7,612.9 862.9,606.4 863.2,614.9 863.4,606.5 863.6,611.2 863.9,540.0 864.1,618.6 864.4,609.0 864.6,531.1 864.8,606.5 865.1,599.1 865.3,593.7 865.5,607.5 865.8,600.3 866.0,597.2 866.2,600.7 866.5,604.9 866.7,601.3 866.9,618.8 867.2,610.9 867.4,606.5 867.6,598.4 867.9,607.8 868.1,603.4 868.4,613.7 868.6,613.9 868.8,604.8 869.1,612.2 869.3,609.2 869.5,608.6 869.8,564.7 870.0,602.7 870.2,595.5 870.5,604.4 870.7,592.3 870.9,588.0 871.2,599.5 871.4,602.1 871.6,570.5 871.9,606.9 872.1,609.1 872.4,603.0 872.6,606.2 872.8,601.9 873.1,618.5 873.3,617.1 873.5,598.8 873.8,609.5 874.0,594.1 874.2,609.1 874.5,614.1 874.7,621.0 874.9,611.6 875.2,607.1 875.4,615.0 875.6,611.9 875.9,600.7 876.1,610.8 876.4,608.3 876.6,604.5 876.8,606.9 877.1,611.3 877.3,611.3 877.5,591.6 877.8,588.5 878.0,607.4 878.2,604.2 878.5,604.8 878.7,602.4 878.9,606.0 879.2,599.9 879.4,604.2 879.6,595.6 879.9,602.0 880.1,597.9 880.4,607.2 880.6,598.9 880.8,595.9 881.1,606.6 881.3,600.5 881.5,601.0 881.8,603.0 882.0,606.0 882.2,604.7 882.5,597.1 882.7,602.5 882.9,591.4 883.2,615.3 883.4,602.6 883.6,607.8 883.9,555.0 884.1,612.4 884.4,601.4 884.6,609.5 884.8,599.8 885.1,572.0 885.3,604.7 885.5,605.6 885.8,597.3 886.0,599.6 886.2,507.9 886.5,605.4 886.7,597.5 886.9,598.0 887.2,602.2 887.4,607.1 887.6,606.5 887.9,584.8 888.1,603.9 888.4,593.5 888.6,608.9 888.8,608.8 889.1,608.5 889.3,595.4 889.5,606.8 889.8,601.8 890.0,597.5 890.2,605.6 890.5,600.6 890.7,607.3 890.9,608.3 891.2,607.1 891.4,606.1 891.6,607.5 891.9,603.5 892.1,594.0 892.4,595.2 892.6,607.4 892.8,593.7 893.1,593.0 893.3,606.9 893.5,596.7 893.8,600.9 894.0,601.6 894.2,606.1 894.5,602.6 894.7,599.4 894.9,602.8 895.2,605.7 895.4,612.7 895.6,601.7 895.9,607.0 896.1,602.4 896.4,605.9 896.6,598.4 896.8,600.1 897.1,581.2 897.3,597.0 897.5,584.8 897.8,609.2 898.0,600.9 898.2,593.1 898.5,597.7 898.7,582.7 898.9,586.3 899.2,599.1 899.4,603.5 899.6,555.0 899.9,602.2 900.1,598.6 900.4,597.3 900.6,608.8 900.8,595.9 901.1,607.2 901.3,599.9 901.5,602.6 901.8,606.1 902.0,600.9 902.2,595.5 902.5,606.6 902.7,608.3 902.9,607.5 903.2,574.7 903.4,603.7 903.6,605.2 903.9,603.9 904.1,604.8 904.4,597.9 904.6,598.4 904.8,602.9 905.1,604.3 905.3,577.9 905.5,582.9 905.8,591.0 906.0,605.5 906.2,598.1 906.5,599.6 906.7,541.0 906.9,604.4 907.2,598.6 907.4,537.0 907.6,591.7 907.9,608.6 908.1,614.8 908.4,537.0 908.6,611.6 908.8,604.9 909.1,608.2 909.3,594.8 909.5,604.3 909.8,594.2 910.0,600.6 910.2,596.5 910.5,601.3 910.7,605.8 910.9,603.4 911.2,595.5 911.4,594.5 911.6,595.3 911.9,596.3 912.1,580.6 912.4,601.1 912.6,564.0 912.8,594.4 913.1,599.6 913.3,596.2 913.5,601.5 913.8,600.6 914.0,588.7 914.2,601.8 914.5,591.6 914.7,595.1 914.9,593.8 915.2,603.3 915.4,595.2 915.6,594.7 915.9,595.2 916.1,598.1 916.3,605.7 916.6,603.6 916.8,587.2 917.1,609.5 917.3,602.0 917.5,610.1 917.8,601.2 918.0,604.5 918.2,580.1 918.5,599.8 918.7,584.4 918.9,604.3 919.2,602.5 919.4,596.8 919.6,595.5 919.9,603.9 920.1,590.1 920.3,599.8 920.6,592.7 920.8,603.7 921.1,613.9 921.3,600.9 921.5,599.6 921.8,598.1 922.0,601.5 922.2,611.0 922.5,533.0 922.7,607.3 922.9,570.2 923.2,599.0 923.4,605.0 923.6,592.1 923.9,608.8 924.1,607.6 924.3,605.4 924.6,600.3 924.8,604.7 925.1,578.4 925.3,610.5 925.5,597.5 925.8,595.3 926.0,604.4 926.2,610.7 926.5,591.9 926.7,605.0 926.9,614.6 927.2,603.1 927.4,599.4 927.6,585.1 927.9,578.7 928.1,600.0 928.3,584.9 928.6,596.7 928.8,604.6 929.1,614.7 929.3,596.5 929.5,599.3 929.8,603.0 930.0,600.2 930.2,603.6 930.5,602.3 930.7,598.2 930.9,604.1 931.2,602.4 931.4,590.9 931.6,604.4 931.9,613.7 932.1,598.8 932.3,606.6 932.6,606.1 932.8,581.3 933.1,596.8 933.3,605.9 933.5,575.5 933.8,603.3 934.0,603.3 934.2,599.7 934.5,603.3 934.7,607.9 934.9,593.0 935.2,612.6 935.4,611.3 935.6,587.5 935.9,605.8 936.1,606.7 936.3,603.6 936.6,598.0 936.8,603.1 937.1,588.6 937.3,611.4 937.5,606.4 937.8,588.7 938.0,605.5 938.2,605.5 938.5,585.1 938.7,599.3 938.9,595.1 939.2,604.1 939.4,601.8 939.6,585.4 939.9,580.2 940.1,594.1 940.3,572.2 940.6,585.2 940.8,590.3 941.1,564.0 941.3,599.3 941.5,600.2 941.8,595.2 942.0,578.5 942.2,591.4 942.5,552.0 942.7,599.5" fill="none" stroke="url(#gg)" stroke-width="1.2" stroke-linejoin="round" opacity="0.93"/>
</g>
<rect x="90.3" y="142" width="1.8" height="487.8" fill="#cccc6a"/>
<text x="93" y="600" font-size="14.5" fill="#f4e640" stroke="#f4e640" stroke-width="0.5">A</text>
<path d="M92 616.5 l2.5 -2 v4z M98.5 616.5 l-2.5 -2 v4z" fill="#f0a030"/>
<text x="81.6" y="149.3" font-size="16.5" textLength="17.69" lengthAdjust="spacingAndGlyphs" text-anchor="end" fill="#111" stroke="#111" stroke-width="0.2">80</text>
<text x="81.6" y="175.3" font-size="16.5" textLength="30.95" lengthAdjust="spacingAndGlyphs" text-anchor="end" fill="#111" stroke="#111" stroke-width="0.2">77,5</text>
<text x="81.6" y="201.3" font-size="16.5" textLength="17.69" lengthAdjust="spacingAndGlyphs" text-anchor="end" fill="#111" stroke="#111" stroke-width="0.2">75</text>
<text x="81.6" y="227.3" font-size="16.5" textLength="30.95" lengthAdjust="spacingAndGlyphs" text-anchor="end" fill="#111" stroke="#111" stroke-width="0.2">72,5</text>
<text x="81.6" y="253.3" font-size="16.5" textLength="17.69" lengthAdjust="spacingAndGlyphs" text-anchor="end" fill="#111" stroke="#111" stroke-width="0.2">70</text>
<text x="81.6" y="279.3" font-size="16.5" textLength="30.95" lengthAdjust="spacingAndGlyphs" text-anchor="end" fill="#111" stroke="#111" stroke-width="0.2">67,5</text>
<text x="81.6" y="305.3" font-size="16.5" textLength="17.69" lengthAdjust="spacingAndGlyphs" text-anchor="end" fill="#111" stroke="#111" stroke-width="0.2">65</text>
<text x="81.6" y="331.3" font-size="16.5" textLength="30.95" lengthAdjust="spacingAndGlyphs" text-anchor="end" fill="#111" stroke="#111" stroke-width="0.2">62,5</text>
<text x="81.6" y="357.3" font-size="16.5" textLength="17.69" lengthAdjust="spacingAndGlyphs" text-anchor="end" fill="#111" stroke="#111" stroke-width="0.2">60</text>
<text x="81.6" y="383.3" font-size="16.5" textLength="30.95" lengthAdjust="spacingAndGlyphs" text-anchor="end" fill="#111" stroke="#111" stroke-width="0.2">57,5</text>
<text x="81.6" y="409.3" font-size="16.5" textLength="17.69" lengthAdjust="spacingAndGlyphs" text-anchor="end" fill="#111" stroke="#111" stroke-width="0.2">55</text>
<text x="81.6" y="435.3" font-size="16.5" textLength="30.95" lengthAdjust="spacingAndGlyphs" text-anchor="end" fill="#111" stroke="#111" stroke-width="0.2">52,5</text>
<text x="81.6" y="461.3" font-size="16.5" textLength="17.69" lengthAdjust="spacingAndGlyphs" text-anchor="end" fill="#111" stroke="#111" stroke-width="0.2">50</text>
<text x="81.6" y="487.3" font-size="16.5" textLength="30.95" lengthAdjust="spacingAndGlyphs" text-anchor="end" fill="#111" stroke="#111" stroke-width="0.2">47,5</text>
<text x="81.6" y="513.3" font-size="16.5" textLength="17.69" lengthAdjust="spacingAndGlyphs" text-anchor="end" fill="#111" stroke="#111" stroke-width="0.2">45</text>
<text x="81.6" y="539.3" font-size="16.5" textLength="30.95" lengthAdjust="spacingAndGlyphs" text-anchor="end" fill="#111" stroke="#111" stroke-width="0.2">42,5</text>
<text x="81.6" y="565.3" font-size="16.5" textLength="17.69" lengthAdjust="spacingAndGlyphs" text-anchor="end" fill="#111" stroke="#111" stroke-width="0.2">40</text>
<text x="81.6" y="591.3" font-size="16.5" textLength="30.95" lengthAdjust="spacingAndGlyphs" text-anchor="end" fill="#111" stroke="#111" stroke-width="0.2">37,5</text>
<text x="81.6" y="617.3" font-size="16.5" textLength="17.69" lengthAdjust="spacingAndGlyphs" text-anchor="end" fill="#111" stroke="#111" stroke-width="0.2">35</text>
<text x="81.6" y="635.3" font-size="16.5" textLength="30.95" lengthAdjust="spacingAndGlyphs" text-anchor="end" fill="#111" stroke="#111" stroke-width="0.2">33,3</text>
<text x="91.5" y="651.6" font-size="16.5" textLength="61.89" lengthAdjust="spacingAndGlyphs" text-anchor="middle" fill="#111" stroke="#111" stroke-width="0.2">13:32:55</text>
<text x="91.5" y="670.5" font-size="16.5" textLength="79.58" lengthAdjust="spacingAndGlyphs" text-anchor="middle" fill="#111" stroke="#111" stroke-width="0.2">14/02/2026</text>
<text x="239.5" y="651.6" font-size="16.5" textLength="61.89" lengthAdjust="spacingAndGlyphs" text-anchor="middle" fill="#111" stroke="#111" stroke-width="0.2">00:00:00</text>
<text x="239.5" y="670.5" font-size="16.5" textLength="79.58" lengthAdjust="spacingAndGlyphs" text-anchor="middle" fill="#111" stroke="#111" stroke-width="0.2">15/02/2026</text>
<text x="410.5" y="651.6" font-size="16.5" textLength="61.89" lengthAdjust="spacingAndGlyphs" text-anchor="middle" fill="#111" stroke="#111" stroke-width="0.2">12:00:00</text>
<text x="410.5" y="670.5" font-size="16.5" textLength="79.58" lengthAdjust="spacingAndGlyphs" text-anchor="middle" fill="#111" stroke="#111" stroke-width="0.2">15/02/2026</text>
<text x="580.5" y="651.6" font-size="16.5" textLength="61.89" lengthAdjust="spacingAndGlyphs" text-anchor="middle" fill="#111" stroke="#111" stroke-width="0.2">00:00:00</text>
<text x="580.5" y="670.5" font-size="16.5" textLength="79.58" lengthAdjust="spacingAndGlyphs" text-anchor="middle" fill="#111" stroke="#111" stroke-width="0.2">16/02/2026</text>
<text x="750.5" y="651.6" font-size="16.5" textLength="61.89" lengthAdjust="spacingAndGlyphs" text-anchor="middle" fill="#111" stroke="#111" stroke-width="0.2">12:00:00</text>
<text x="750.5" y="670.5" font-size="16.5" textLength="79.58" lengthAdjust="spacingAndGlyphs" text-anchor="middle" fill="#111" stroke="#111" stroke-width="0.2">16/02/2026</text>
<text x="942.7" y="651.6" font-size="16.5" textLength="61.89" lengthAdjust="spacingAndGlyphs" text-anchor="middle" fill="#111" stroke="#111" stroke-width="0.2">01:31:57</text>
<text x="942.7" y="670.5" font-size="16.5" textLength="79.58" lengthAdjust="spacingAndGlyphs" text-anchor="middle" fill="#111" stroke="#111" stroke-width="0.2">17/02/2026</text>
<path d="M84.5 143.5 H89 M84.5 169.5 H89 M84.5 195.5 H89 M84.5 221.5 H89 M84.5 247.5 H89 M84.5 273.5 H89 M84.5 299.5 H89 M84.5 325.5 H89 M84.5 351.5 H89 M84.5 377.5 H89 M84.5 403.5 H89 M84.5 429.5 H89 M84.5 455.5 H89 M84.5 481.5 H89 M84.5 507.5 H89 M84.5 533.5 H89 M84.5 559.5 H89 M84.5 585.5 H89 M84.5 611.5 H89 M84.5 629.5 H89 M91.5 631.5 V637 M239.5 631.5 V637 M410.5 631.5 V637 M580.5 631.5 V637 M750.5 631.5 V637 M942.7 631.5 V637 M920.5 631.5 V637" stroke="#2a2a2a" stroke-width="1" fill="none"/>
<text x="95.0" y="136.7" font-size="16.3" fill="#111" stroke="#111" stroke-width="0.2">Sound Level Chart</text>
<text x="495.0" y="694.6" font-size="20.4" fill="#000" stroke="#000" stroke-width="0.2">Time</text>
<text transform="translate(42.9 442.2) rotate(-90)" font-size="20.9" fill="#000" stroke="#000" stroke-width="0.2">Sound Level</text>
</svg>
<div class="b" style="left:0.00px;top:0.00px;width:1040.00px;height:117.00px;border-top:1px solid #b4b4b4;border-left:1px solid #dcdcdc;border-bottom:1px solid #484848;background:#f0f0f0;"></div>
<div class="b" style="left:0.00px;top:119.00px;width:1039.00px;height:1.00px;background:#bebebe;"></div>
<div class="b" style="left:22.00px;top:25.00px;width:168.00px;height:24.50px;background:#f2f2f2;border:1px solid #a6a6a6;"></div>
<div class="b" style="left:22.00px;top:80.00px;width:171.00px;height:24.50px;background:#f2f2f2;border:1px solid #a6a6a6;"></div>
<div class="b" style="left:223.00px;top:25.00px;width:206.00px;height:24.50px;background:#f2f2f2;border:1px solid #a6a6a6;"></div>
<div class="b" style="left:223.00px;top:80.00px;width:206.00px;height:24.50px;background:#f2f2f2;border:1px solid #a6a6a6;"></div>
<div class="b" style="left:462.00px;top:23.50px;width:172.00px;height:24.00px;background:#fff;border:1px solid #a6a6a6;"></div>
<div class="b" style="left:616.00px;top:25.30px;width:16.00px;height:20.40px;background:#c4c4c4;border:1px solid #b0b0b0;"></div>
<svg class="b" style="left:616px;top:25px" width="16" height="21"><path d="M4.5 8.5 L8 12 L11.5 8.5" fill="none" stroke="#9a9a9a" stroke-width="1.2"/></svg>
<div class="b" style="left:462.00px;top:80.00px;width:172.00px;height:24.50px;background:#fff;border:1px solid #a6a6a6;"></div>
<div class="b" style="left:667.00px;top:25.00px;width:86.00px;height:24.50px;background:#f2f2f2;border:1px solid #a6a6a6;"></div>
<div class="b" style="left:667.00px;top:80.00px;width:86.00px;height:24.50px;background:#f2f2f2;border:1px solid #a6a6a6;"></div>
<div class="b" style="left:786.00px;top:23.50px;width:82.00px;height:24.00px;background:#f4f4f4;border:1px solid #a6a6a6;"></div>
<div class="b" style="left:787.00px;top:24.50px;width:62.00px;height:27.50px;background:#fff;"></div>
<div class="b" style="left:850.40px;top:25.30px;width:15.60px;height:20.40px;background:#dcdcdc;border:1px solid #a8a8a8;"></div>
<svg class="b" style="left:850px;top:25px" width="16" height="21"><path d="M4.5 8.5 L8 12 L11.5 8.5" fill="none" stroke="#444" stroke-width="1.2"/></svg>
<div class="b" style="left:786.00px;top:80.00px;width:86.00px;height:24.50px;background:#f2f2f2;border:1px solid #a6a6a6;"></div>
<div class="b" style="left:928.00px;top:25.00px;width:86.00px;height:24.50px;background:#fff;border:1px solid #a6a6a6;"></div>
<div class="b" style="left:928.00px;top:82.00px;width:86.00px;height:24.50px;background:#fff;border:1px solid #a6a6a6;"></div>
<div class="b" style="left:1123.50px;top:-10.00px;width:94.00px;height:32.80px;background:#c9c9c9;border:1px solid #bdbdbd;"></div>
<div class="b" style="left:1123.50px;top:31.80px;width:94.00px;height:33.00px;background:#c9c9c9;border:1px solid #bdbdbd;"></div>
<div class="b" style="left:1123.50px;top:73.50px;width:94.00px;height:33.50px;background:#c9c9c9;border:1px solid #bdbdbd;"></div>
<div class="b" style="left:1039.00px;top:0.00px;width:1.00px;height:703.00px;background:#666;"></div>
<div class="b" style="left:1040.00px;top:0.00px;width:1.00px;height:703.00px;background:#8c8c8c;"></div>
<div class="b" style="left:1041.00px;top:119.00px;width:1.00px;height:584.00px;background:#666;"></div>
<div class="b" style="left:1041.00px;top:0.00px;width:1.00px;height:119.00px;background:#c8c8c8;"></div>
<div class="b" style="left:1042.00px;top:119.00px;width:2.00px;height:584.00px;background:#dcdcdc;"></div>
<div class="b" style="left:1041.00px;top:119.00px;width:256.00px;height:1.00px;background:#555;"></div>
<div class="b" style="left:1042.00px;top:120.00px;width:255.00px;height:2.00px;background:#d2d2d2;"></div>
<div class="b" style="left:1042.00px;top:122.00px;width:255.00px;height:1.00px;background:#585858;"></div>
<div class="b" style="left:1043.00px;top:123.00px;width:254.00px;height:2.30px;background:#d6d6d6;"></div>
<div class="b" style="left:1044.00px;top:125.30px;width:253.00px;height:1.70px;background:#8a8a8a;"></div>
<div class="b" style="left:1043.00px;top:430.00px;width:254.00px;height:1.00px;background:#4a4a4a;"></div>
<div class="b" style="left:1044.00px;top:127.00px;width:253.00px;height:211.70px;background:#000;"></div>
<div class="b" style="left:1051.00px;top:155.50px;width:77.00px;height:1.50px;background:#151515;"></div>
<div class="b" style="left:1127.00px;top:133.00px;width:1.50px;height:24.00px;background:#151515;"></div>
<div class="b" style="left:1217.00px;top:155.50px;width:61.00px;height:1.50px;background:#151515;"></div>
<div class="b" style="left:1276.50px;top:133.00px;width:1.50px;height:24.00px;background:#151515;"></div>
<div class="b" style="left:1130.00px;top:238.00px;width:140.00px;height:1.50px;background:#151515;"></div>
<div class="b" style="left:1268.50px;top:213.00px;width:1.50px;height:26.50px;background:#151515;"></div>
<div class="b" style="left:1097.00px;top:295.00px;width:169.00px;height:1.50px;background:#151515;"></div>
<div class="b" style="left:1264.50px;top:243.00px;width:1.50px;height:53.50px;background:#151515;"></div>
<div class="b" style="left:1146.00px;top:332.50px;width:63.00px;height:1.50px;background:#151515;"></div>
<div class="b" style="left:1207.50px;top:307.00px;width:1.50px;height:27.00px;background:#151515;"></div>
<div class="b" style="left:1218.00px;top:332.50px;width:79.00px;height:1.50px;background:#151515;"></div>
<div class="b" style="left:1293.00px;top:309.00px;width:1.50px;height:25.00px;background:#151515;"></div>
<div class="b" style="left:1056.20px;top:164.50px;width:230.30px;height:15.10px;background:#1b1b1b;"></div>
<div class="b" style="left:1056.80px;top:165.00px;width:15.60px;height:14.20px;background:linear-gradient(#4fc425,#3a9c1c 60%,#2f8a18);"></div>
<div class="b" style="left:1066.50px;top:165.00px;width:1.10px;height:14.20px;background:#2a7a16;"></div>
<div class="b" style="left:1068.40px;top:165.00px;width:0.90px;height:14.20px;background:#66c84a;"></div>
<div class="b" style="left:1063.70px;top:351.60px;width:66.90px;height:29.30px;background:#c9c9c9;border:1px solid #bdbdbd;"></div>
<div class="b" style="left:1151.80px;top:351.60px;width:66.60px;height:29.30px;background:#c9c9c9;border:1px solid #bdbdbd;"></div>
<div class="b" style="left:1063.70px;top:392.60px;width:66.90px;height:29.30px;background:#c9c9c9;border:1px solid #bdbdbd;"></div>
<div class="b" style="left:1151.80px;top:392.60px;width:66.60px;height:29.30px;background:#c9c9c9;border:1px solid #bdbdbd;"></div>
<div class="b" style="left:1249.00px;top:351.20px;width:30.00px;height:29.40px;background:#cdcdcd;"></div>
<svg class="b" style="left:1249px;top:351px" width="30" height="30"><circle cx="15.8" cy="15.3" r="13" fill="#5f9a5f" stroke="#7c9c7c" stroke-width="1"/></svg>
<div class="b" style="left:1246.00px;top:398.00px;width:44.60px;height:24.30px;background:#c2c2c2;border:1px solid #b0b0b0;"></div>
<div class="b" style="left:1246.00px;top:398.00px;width:22.50px;height:24.30px;background:#a9a9a9;"></div>
<div class="b" style="left:1279.00px;top:399.00px;width:1.00px;height:22.50px;background:#aaa;"></div>
<div class="b" style="left:1042.00px;top:546.30px;width:255.00px;height:1.50px;background:#6a6a6a;"></div>
<div class="b" style="left:1044.00px;top:431.00px;width:253.00px;height:2.00px;background:#f3f3f3;"></div>
<div class="b" style="left:1044.00px;top:433.00px;width:253.00px;height:1.00px;background:#c2c2c2;"></div>
<div class="b" style="left:1058.80px;top:442.80px;width:59.40px;height:92.40px;background:#fff;border:3px solid;border-color:#cfcfcf #e9e9e9 #e9e9e9 #cfcfcf;"></div>
<svg class="b" style="left:1060px;top:444px" width="58" height="90">
<path d="M11.5 15 V58" stroke="#222" stroke-width="1" stroke-dasharray="1 1" fill="none"/><path d="M16 10.5 H19" stroke="#222" stroke-width="1" stroke-dasharray="1 1" fill="none"/><path d="M16 61.5 H19" stroke="#222" stroke-width="1" stroke-dasharray="1 1" fill="none"/>
<path d="M27.5 18 V30.5 H44" stroke="#222" stroke-width="1" stroke-dasharray="1 1" fill="none"/><path d="M27.5 69 V81.5 H44" stroke="#222" stroke-width="1" stroke-dasharray="1 1" fill="none"/>
<rect x="7.5" y="6.5" width="8" height="8" fill="#fff" stroke="#8a8a8a"/><path d="M9.5 10.5 H13.5" stroke="#333"/>
<rect x="7.5" y="57.5" width="8" height="8" fill="#fff" stroke="#8a8a8a"/><path d="M9.5 61.5 H13.5" stroke="#333"/>
<rect x="19" y="3" width="16" height="15" fill="#000"/>
<g stroke="#dede84" stroke-width="0.9"><path d="M21.5 10.5 H25.5 M29.5 10.5 H33.5 M27.5 4.5 V8.5 M27.5 12.5 V16.5 M25.3 8.3 L29.7 12.7 M29.7 8.3 L25.3 12.7"/></g>
<rect x="19" y="54" width="16" height="15" fill="#000"/>
<g stroke="#dede84" stroke-width="0.9"><path d="M21.5 61.5 H25.5 M29.5 61.5 H33.5 M27.5 55.5 V59.5 M27.5 63.5 V67.5 M25.3 59.3 L29.7 63.7 M29.7 59.3 L25.3 63.7"/></g>
<rect x="36.2" y="1.2" width="15.3" height="19.6" fill="#ffff1e"/>
</svg>
<div class="b" style="left:1142.00px;top:449.60px;width:114.60px;height:88.00px;background:linear-gradient(90deg,#c6c6c6,#d2d2d2);border-right:1px solid #8e8e8e;border-bottom:1px solid #8e8e8e;border-top:1px solid #bcbcbc;border-left:1px solid #bcbcbc;"></div>
<svg class="b" style="left:1259.3px;top:449.3px" width="27.8" height="17.5"><rect width="27.8" height="17.5" fill="#000"/><path d="M2.2 13.5 L10 3 L18.5 13.5 L26.6 2.5" fill="none" stroke="#7ed858" stroke-width="1"/></svg>
<svg class="b" style="left:1259.3px;top:472.4px" width="27.8" height="17.5"><rect width="27.8" height="17.5" fill="#000"/><path d="M3.3 12.9 L10 3.6 L17.8 12.9 L25.6 3.6" fill="none" stroke="#ee5050" stroke-width="1.8"/><rect x="1.0999999999999996" y="10.7" width="4.4" height="4.4" fill="#f25454"/><rect x="7.8" y="1.4" width="4.4" height="4.4" fill="#f25454"/><rect x="15.600000000000001" y="10.7" width="4.4" height="4.4" fill="#f25454"/><rect x="23.400000000000002" y="1.4" width="4.4" height="4.4" fill="#f25454"/></svg>
<svg class="b" style="left:1259.3px;top:495.5px" width="27.8" height="17.5"><rect width="27.8" height="17.5" fill="#000"/><path d="M2.6 13.3 L10 3.4 L18.2 13.3 L26 3.2" fill="none" stroke="#dcdcdc" stroke-width="1"/><rect x="1.0" y="11.700000000000001" width="3.2" height="3.2" fill="#000" stroke="#dcdcdc" stroke-width="0.9"/><rect x="8.4" y="1.7999999999999998" width="3.2" height="3.2" fill="#000" stroke="#dcdcdc" stroke-width="0.9"/><rect x="16.599999999999998" y="11.700000000000001" width="3.2" height="3.2" fill="#000" stroke="#dcdcdc" stroke-width="0.9"/><rect x="24.4" y="1.6" width="3.2" height="3.2" fill="#000" stroke="#dcdcdc" stroke-width="0.9"/></svg>
<svg class="b" style="left:1259.3px;top:518.3px" width="27.8" height="17.5"><rect width="27.8" height="17.5" fill="#000"/><path d="M2.6 13.3 L10 3.4 L18.2 13.3 L26 3.2" fill="none" stroke="#56aef2" stroke-width="1"/><rect x="1.0" y="11.700000000000001" width="3.2" height="3.2" fill="#000" stroke="#56aef2" stroke-width="0.9"/><rect x="8.4" y="1.7999999999999998" width="3.2" height="3.2" fill="#000" stroke="#56aef2" stroke-width="0.9"/><rect x="16.599999999999998" y="11.700000000000001" width="3.2" height="3.2" fill="#000" stroke="#56aef2" stroke-width="0.9"/><rect x="24.4" y="1.6" width="3.2" height="3.2" fill="#000" stroke="#56aef2" stroke-width="0.9"/></svg>
<div class="b" style="left:1042.00px;top:701.50px;width:255.00px;height:1.50px;background:#6a6a6a;"></div>
<div class="b" style="left:1044.00px;top:549.00px;width:253.00px;height:1.00px;background:#c6c6c6;"></div>
<div class="b" style="left:1065.20px;top:562.00px;width:19.60px;height:15.80px;background:linear-gradient(160deg,#dcdcdc,#b4b4b4);border:1px solid #b8b8b8;border-right-color:#9c9c9c;border-bottom-color:#9c9c9c;"></div>
<div class="b" style="left:1086.80px;top:562.00px;width:19.10px;height:15.80px;background:linear-gradient(160deg,#dcdcdc,#b4b4b4);border:1px solid #b8b8b8;border-right-color:#9c9c9c;border-bottom-color:#9c9c9c;"></div>
<div class="b" style="left:1107.30px;top:562.00px;width:19.60px;height:15.80px;background:linear-gradient(160deg,#6a6a6a,#868686);border:1px solid #6a6a6a;"></div>
<svg class="b" style="left:1065px;top:562px" width="63" height="16">
<path d="M3.9 8.6 H17.2 M10.5 1.9 V15.2" stroke="#0a0a0a" stroke-width="1.2"/><circle cx="10.5" cy="8.6" r="1.1" fill="#eee" stroke="#0a0a0a" stroke-width="0.7"/><rect x="3.4" y="3.6" width="2.6" height="2.6" fill="#6e6e6e"/>
<circle cx="33.6" cy="6.5" r="4.1" fill="#f6f6f6" stroke="#0a0a0a" stroke-width="1.2"/><path d="M31.4 6.5 H35.8 M33.6 4.3 V8.7" stroke="#0a0a0a" stroke-width="1"/><path d="M30.2 10 L25.8 14" stroke="#0a0a0a" stroke-width="2"/><path d="M33 11.8 h5.4 l-2.7 2.8z" fill="#0a0a0a"/><rect x="24.4" y="3.3" width="2.6" height="2.6" fill="#7a7a7a"/>
<path d="M50.2 14.2 L46.8 10 L47.8 8.6 L50 10.2 V4.6 q0.9 -1.3 1.8 0 V3.4 q0.9 -1.3 1.8 0 V4 q0.9 -1.2 1.8 0 V5.6 q0.9 -1 1.7 0.2 V10.5 L56.2 14.2 Z" fill="#fff" stroke="#0a0a0a" stroke-width="1" stroke-linejoin="round"/><path d="M51.8 4.6 V9.2 M53.6 3.6 V9.2 M55.4 4.4 V9.2" stroke="#0a0a0a" stroke-width="0.95"/><rect x="44.3" y="3.2" width="3" height="3" fill="#62d444"/>
</svg>
<svg class="b" style="left:0;top:0" width="1297" height="703">
<path d="M1156.2 570.4 L1172.4 555.2 L1188 570.4 L1172.4 584.8 Z" fill="#a8a8a8" stroke="#8c8c8c" stroke-width="0.8"/>
<path d="M1164.3 562.8 L1180.2 577.6 M1180.2 562.8 L1164.3 577.6" stroke="#e8e8e8" stroke-width="1.6"/>
<path d="M1164.9 562.2 L1180.8 577 M1179.6 562.2 L1163.7 577" stroke="#7e7e7e" stroke-width="0.6"/>
</svg>
<div class="b" style="left:1066.30px;top:595.20px;width:229.70px;height:25.50px;background:#f1f1f1;border:1px solid #b2b2b2;"></div>
<div class="b" style="left:1066.30px;top:622.30px;width:229.70px;height:25.10px;background:#f1f1f1;border:1px solid #b2b2b2;"></div>
<div class="b" style="left:1067.50px;top:668.20px;width:100.10px;height:24.10px;background:#f2f2f2;border:1px solid #a6a6a6;"></div>
<div class="b" style="left:1192.20px;top:668.20px;width:100.20px;height:24.10px;background:#f2f2f2;border:1px solid #a6a6a6;"></div>
<svg width="1297" height="703" style="left:0;top:0">
<text x="24.80" y="19.70" font-size="15.83" fill="#000" stroke="#000" stroke-width="0.2" textLength="32.29" lengthAdjust="spacingAndGlyphs">Start</text>
<text x="26.60" y="42.75" font-size="16.35" fill="#000" stroke="#000" stroke-width="0.2" textLength="146.72" lengthAdjust="spacingAndGlyphs">14-02-2026 13:13:47</text>
<text x="25.20" y="74.50" font-size="16.25" fill="#000" stroke="#000" stroke-width="0.2" textLength="27.94" lengthAdjust="spacingAndGlyphs">End</text>
<text x="26.60" y="97.75" font-size="16.35" fill="#000" stroke="#000" stroke-width="0.2" textLength="146.72" lengthAdjust="spacingAndGlyphs">17-02-2026 01:59:42</text>
<text x="224.50" y="19.60" font-size="16.25" fill="#000" stroke="#000" stroke-width="0.2" textLength="29.66" lengthAdjust="spacingAndGlyphs">Max</text>
<text x="227.60" y="42.75" font-size="16.35" fill="#000" stroke="#000" stroke-width="0.2" textLength="181.86" lengthAdjust="spacingAndGlyphs">58,0 15-02-2026 17:31:47</text>
<text x="224.50" y="74.50" font-size="16.25" fill="#000" stroke="#000" stroke-width="0.2" textLength="25.30" lengthAdjust="spacingAndGlyphs">Min</text>
<text x="227.60" y="97.75" font-size="16.35" fill="#000" stroke="#000" stroke-width="0.2" textLength="181.86" lengthAdjust="spacingAndGlyphs">33,3 14-02-2026 18:38:16</text>
<text x="463.60" y="18.00" font-size="16.25" fill="#000" stroke="#000" stroke-width="0.2" textLength="25.30" lengthAdjust="spacingAndGlyphs">File</text>
<text x="466.60" y="41.00" font-size="16.35" fill="#000" stroke="#000" stroke-width="0.2" textLength="8.79" lengthAdjust="spacingAndGlyphs">0</text>
<text x="464.50" y="74.50" font-size="16.25" fill="#000" stroke="#000" stroke-width="0.2" textLength="79.40" lengthAdjust="spacingAndGlyphs">Start Name</text>
<text x="466.90" y="97.75" font-size="16.35" fill="#000" stroke="#000" stroke-width="0.2" textLength="86.08" lengthAdjust="spacingAndGlyphs">SoundMeter</text>
<text x="670.50" y="21.00" font-size="16.25" fill="#000" stroke="#000" stroke-width="0.2" textLength="27.92" lengthAdjust="spacingAndGlyphs">Unit</text>
<text x="671.60" y="42.75" font-size="16.35" fill="#000" stroke="#000" stroke-width="0.2" textLength="29.86" lengthAdjust="spacingAndGlyphs">dBA</text>
<text x="671.50" y="75.00" font-size="16.25" fill="#000" stroke="#000" stroke-width="0.2" textLength="65.44" lengthAdjust="spacingAndGlyphs">Data NO.</text>
<text x="671.60" y="97.75" font-size="16.35" fill="#000" stroke="#000" stroke-width="0.2" textLength="35.15" lengthAdjust="spacingAndGlyphs">3619</text>
<text x="788.80" y="17.80" font-size="16.16" fill="#000" stroke="#000" stroke-width="0.2" textLength="104.10" lengthAdjust="spacingAndGlyphs">SampleRate(s)</text>
<text x="791.00" y="41.00" font-size="16.35" fill="#000" stroke="#000" stroke-width="0.2" textLength="17.58" lengthAdjust="spacingAndGlyphs">60</text>
<text x="789.00" y="74.50" font-size="16.25" fill="#000" stroke="#000" stroke-width="0.2" textLength="58.19" lengthAdjust="spacingAndGlyphs">Average</text>
<text x="790.60" y="97.75" font-size="16.35" fill="#000" stroke="#000" stroke-width="0.2" textLength="30.75" lengthAdjust="spacingAndGlyphs">35,4</text>
<text x="931.00" y="20.60" font-size="16.25" fill="#000" stroke="#000" stroke-width="0.2" textLength="76.79" lengthAdjust="spacingAndGlyphs">High Alarm</text>
<text x="933.60" y="42.75" font-size="16.35" fill="#000" stroke="#000" stroke-width="0.2" textLength="17.58" lengthAdjust="spacingAndGlyphs">80</text>
<text x="930.50" y="77.80" font-size="16.25" fill="#000" stroke="#000" stroke-width="0.2" textLength="73.30" lengthAdjust="spacingAndGlyphs">Low Alarm</text>
<text x="933.40" y="99.75" font-size="16.35" fill="#000" stroke="#000" stroke-width="0.2" textLength="17.58" lengthAdjust="spacingAndGlyphs">40</text>
<text x="1140.62" y="15.50" font-size="25" fill="#6e6e6e" stroke="#6e6e6e" stroke-width="0.2">Clear</text>
<text x="1137.84" y="57.30" font-size="25" fill="#6e6e6e" stroke="#6e6e6e" stroke-width="0.2">About</text>
<text x="1149.66" y="99.00" font-size="25" fill="#6e6e6e" stroke="#6e6e6e" stroke-width="0.2">Exit</text>
<text x="1051.00" y="197.00" font-size="10.5" fill="#3d9c33" stroke="#3d9c33" stroke-width="0.2">30</text>
<text x="1275.60" y="197.00" font-size="10.5" fill="#3d9c33" stroke="#3d9c33" stroke-width="0.2">130</text>
<text x="1221.30" y="148.30" font-size="10.5" fill="#3d9c33" stroke="#3d9c33" stroke-width="0.2">FAST</text>
<text x="1090.60" y="230.20" font-size="17" fill="#3d9c33" stroke="#3d9c33" stroke-width="0.2" textLength="34.32" lengthAdjust="spacingAndGlyphs">TIME</text>
<text x="1135.20" y="229.80" font-size="14" fill="#3d9c33" font-weight="bold" stroke="#3d9c33" stroke-width="0.2">02:00:08</text>
<text x="1105.10" y="282.50" font-size="35.5" fill="#37a22c" font-weight="bold" stroke="#37a22c" stroke-width="0.2" textLength="72.26" lengthAdjust="spacingAndGlyphs">35,6</text>
<text x="1152.00" y="324.80" font-size="16.5" fill="#3d9c33" stroke="#3d9c33" stroke-width="0.2">dBA</text>
<text x="1226.50" y="323.20" font-size="10.5" fill="#3d9c33" stroke="#3d9c33" stroke-width="0.2">AUTO</text>
<text x="1077.70" y="373.30" font-size="20" fill="#6e6e6e" stroke="#6e6e6e" stroke-width="0.2">SET</text>
<text x="1156.20" y="373.30" font-size="20" fill="#6e6e6e" stroke="#6e6e6e" stroke-width="0.2">dBA/C</text>
<text x="1066.08" y="414.30" font-size="21.1" fill="#6e6e6e" stroke="#6e6e6e" stroke-width="0.2">SLOW</text>
<text x="1153.97" y="414.30" font-size="20" fill="#6e6e6e" stroke="#6e6e6e" stroke-width="0.2">LEVEL</text>
<text x="1247.30" y="413.30" font-size="15.5" fill="#707070" stroke="#707070" stroke-width="0.2">Close</text>
<text x="1098.70" y="459.80" font-size="16.87" fill="#000" stroke="#000" stroke-width="0.2" textLength="10.87" lengthAdjust="spacingAndGlyphs">A</text>
<text x="1100.30" y="510.60" font-size="16.87" fill="#000" stroke="#000" stroke-width="0.2" textLength="10.87" lengthAdjust="spacingAndGlyphs">B</text>
<text x="1145.10" y="466.80" font-size="18.34" fill="#000" stroke="#000" stroke-width="0.2" textLength="93.60" lengthAdjust="spacingAndGlyphs">SoundLevel</text>
<text x="1145.10" y="488.80" font-size="18.11" fill="#000" stroke="#000" stroke-width="0.2" textLength="53.49" lengthAdjust="spacingAndGlyphs">Failure</text>
<text x="1145.10" y="510.80" font-size="17.99" fill="#000" stroke="#000" stroke-width="0.2" textLength="85.00" lengthAdjust="spacingAndGlyphs">High Alarm</text>
<text x="1145.10" y="532.80" font-size="18.01" fill="#000" stroke="#000" stroke-width="0.2" textLength="81.23" lengthAdjust="spacingAndGlyphs">Low Alarm</text>
<text x="1053.00" y="615.80" font-size="16.04" fill="#000" stroke="#000" stroke-width="0.2" textLength="10.34" lengthAdjust="spacingAndGlyphs">A</text>
<text x="1053.00" y="642.50" font-size="16.04" fill="#000" stroke="#000" stroke-width="0.2" textLength="10.34" lengthAdjust="spacingAndGlyphs">B</text>
<text x="1068.20" y="663.30" font-size="16.25" fill="#000" stroke="#000" stroke-width="0.2" textLength="64.54" lengthAdjust="spacingAndGlyphs">A-B(NO.)</text>
<text x="1193.40" y="663.30" font-size="16.45" fill="#000" stroke="#000" stroke-width="0.2" textLength="95.97" lengthAdjust="spacingAndGlyphs">A-B(Average)</text>
<text x="1072.10" y="685.75" font-size="16.35" fill="#000" stroke="#000" stroke-width="0.2" textLength="8.79" lengthAdjust="spacingAndGlyphs">0</text>
<text x="1196.80" y="685.75" font-size="16.35" fill="#000" stroke="#000" stroke-width="0.2" textLength="8.79" lengthAdjust="spacingAndGlyphs">0</text>
</svg>
</body></html>
